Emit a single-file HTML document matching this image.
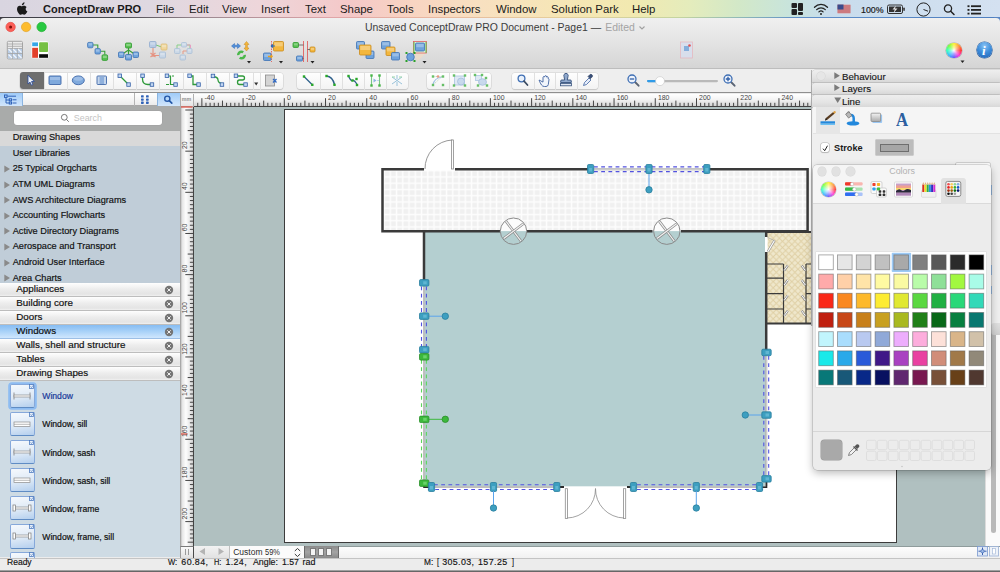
<!DOCTYPE html><html><head><meta charset="utf-8"><title>ConceptDraw PRO</title><style>*{box-sizing:border-box;margin:0;padding:0}
html,body{width:1000px;height:572px;overflow:hidden;background:#ececec;font-family:"Liberation Sans",sans-serif;color:#222}
#root{position:absolute;left:0;top:0;width:1000px;height:572px;overflow:hidden}
.abs{position:absolute}
svg{position:absolute;overflow:visible}
.t{position:absolute;white-space:nowrap;line-height:1}
#menubar{position:absolute;left:0;top:0;width:1000px;height:18px;background:linear-gradient(90deg,#d9d5e0 0,#dfd8e1 150px,#eed6da 260px,#f4c8c8 350px,#f8d4c2 410px,#f8e0c0 480px,#f6e6b6 560px,#f2e9b0 630px,#e4ecbc 690px,#d2e8c8 740px,#c8e4dc 790px,#c8dcec 830px,#d4e1f1 1000px)}
#mbline{position:absolute;left:0;top:17px;width:1000px;height:1.2px;background:linear-gradient(90deg,#3c3c44 0,#4a4a52 120px,#9a8890 200px,#e0a4a8 330px,#e8b4a0 420px,#e6cf9c 560px,#c4d4a0 680px,#8fb8b8 740px,#5f8fc8 800px,#4f7fc0 1000px)}
#menubar .t{top:3.7px;font-size:11.4px;color:#1a1a1a}
#titlebar{position:absolute;left:0;top:18px;width:1000px;height:51px;background:linear-gradient(#f0f0f0 0,#e6e6e6 20px,#d5d5d5 50px);border-bottom:1px solid #bdbdbd;border-radius:4px 4px 0 0}
#tb2{position:absolute;left:0;top:69px;width:1000px;height:24.4px;background:#eeeeee;border-bottom:1.2px solid #8f8f8f}
.grp{position:absolute;top:72.5px;height:16.5px;background:linear-gradient(#fefefe,#f3f3f3);border-radius:3px;box-shadow:0 0 0 .5px #d0d0d0,0 1px 1px rgba(0,0,0,.2)}
.grp i{position:absolute;top:0;width:1px;height:17px;background:#e0e0e0}
.st{font-size:9.200px;color:#111;-webkit-text-stroke:.18px #111}
.sb{font-size:9.800px;color:#111;-webkit-text-stroke:.18px #111}
.ss{font-size:8.620px;color:#111;-webkit-text-stroke:.2px currentColor}
.sbar{color:#111;-webkit-text-stroke:.15px #111}
.ph{font-size:9.700px;color:#141414;-webkit-text-stroke:.12px #141414}
</style></head><body><div id="root">
<div id="menubar">
<span class="t" style="left:43px;font-weight:bold;font-size:11.05px;">ConceptDraw PRO</span>
<span class="t" style="left:156px;">File</span>
<span class="t" style="left:189px;">Edit</span>
<span class="t" style="left:222px;">View</span>
<span class="t" style="left:261px;">Insert</span>
<span class="t" style="left:305px;">Text</span>
<span class="t" style="left:340px;">Shape</span>
<span class="t" style="left:387px;">Tools</span>
<span class="t" style="left:428px;">Inspectors</span>
<span class="t" style="left:496px;">Window</span>
<span class="t" style="left:551px;">Solution Park</span>
<span class="t" style="left:632px;">Help</span>
<span class="t " style="left:861.0px;top:4.6px;font-size:9.70px;transform:scaleX(0.911);transform-origin:0 0;-webkit-text-stroke:.2px #1a1a1a">100%</span>
<svg style="left:16.500px;top:1.800px" width="11" height="13.500" viewBox="0 0 12 14"><path d="M8.2 0c.1 1-.3 1.800-.9 2.400-.5.600-1.300 1-2 .900-.1-.9.300-1.800.9-2.300C6.700.4 7.600 0 8.200 0zM10.900 4.800c-.9.500-1.400 1.400-1.400 2.400 0 1.200.7 2.200 1.800 2.600-.3.900-.8 1.800-1.400 2.500-.5.700-1.100 1.300-1.900 1.300s-1.100-.5-2-.5c-1 0-1.300.5-2.100.5s-1.400-.7-2-1.400C.8 10.800 0 8.900 0 7.200 0 4.900 1.500 3.600 3 3.600c.8 0 1.600.6 2.100.6.500 0 1.400-.6 2.400-.6 1.100 0 2.200.5 2.800 1.500z" fill="#1b1b1b"/></svg>
<svg style="left:789px;top:2px" width="200" height="14" viewBox="0 0 200 14"><g fill="#222"><rect x="2.500" y="1" width="5.500" height="5" rx="1"/><rect x="9" y="1" width="5" height="8" rx="1"/><rect x="2.500" y="7" width="5.500" height="6" rx="1"/><rect x="9" y="10" width="5" height="3" rx="1"/></g><g fill="none" stroke="#222" stroke-width="1.300" stroke-linecap="round"><path d="M25.500 5.200a9 9 0 0 1 13 0"/><path d="M27.700 7.600a6 6 0 0 1 8.600 0"/><path d="M29.900 9.900a3 3 0 0 1 4.200 0"/></g><circle cx="32" cy="12" r="1" fill="#222"/><rect x="48.500" y="2.500" width="13" height="9" fill="#d9a2a6"/><g fill="#c0525a"><rect x="48.500" y="3.500" width="13" height="1"/><rect x="48.500" y="5.500" width="13" height="1"/><rect x="48.500" y="7.500" width="13" height="1"/><rect x="48.500" y="9.500" width="13" height="1"/></g><rect x="48.500" y="2.500" width="6" height="5" fill="#3a4a8c"/><rect x="98.500" y="3" width="15" height="8.500" rx="1.500" fill="none" stroke="#333" stroke-width="1"/><rect x="114.300" y="5.500" width="1.500" height="3.500" rx=".7" fill="#333"/><rect x="100" y="4.500" width="12" height="5.500" fill="#333"/><path d="M107 3.500l-3.500 4h2.300l-1.300 3.500 4-4.500h-2.500z" fill="#e8e8e8"/><circle cx="134.500" cy="7.500" r="6.600" fill="none" stroke="#222" stroke-width="1"/><path d="M134.500 7.500l4.500 1.700" stroke="#222" stroke-width="1" fill="none"/><circle cx="159" cy="6.500" r="3.600" fill="none" stroke="#222" stroke-width="1.300"/><path d="M161.700 9.200l3.300 3.300" stroke="#222" stroke-width="1.500" stroke-linecap="round"/><g fill="#222" transform="translate(-2.500 .8)"><rect x="181" y="2.500" width="2" height="1.800"/><rect x="184.500" y="2.500" width="10" height="1.800"/><rect x="181" y="6.200" width="2" height="1.800"/><rect x="184.500" y="6.200" width="10" height="1.800"/><rect x="181" y="9.900" width="2" height="1.800"/><rect x="184.500" y="9.900" width="10" height="1.800"/></g></svg>
</div>
<div id="mbline"></div>
<div class="abs" style="left:0;top:17px;width:6px;height:6px;background:#3c3c44"></div><div class="abs" style="left:994px;top:17px;width:6px;height:6px;background:#5a86c4"></div>
<div id="titlebar"></div><div id="tb2"></div>
<svg style="left:0;top:18px" width="60" height="20" viewBox="0 18 60 20"><circle cx="10.600" cy="27" r="4.700" fill="#fc5f57" stroke="#e0443e" stroke-width=".6"/><circle cx="10.600" cy="27" r="1.500" fill="#7c1008"/><circle cx="26.100" cy="27" r="4.700" fill="#fdbc2e" stroke="#dfa023" stroke-width=".6"/><circle cx="41.600" cy="27" r="4.700" fill="#28c840" stroke="#1dad2b" stroke-width=".6"/></svg>
<span class="t" style="left:365px;top:23.1px;font-size:10.450px;color:#3c3c3c">Unsaved ConceptDraw PRO Document - Page1 <span style="letter-spacing:-1px">—</span> <span style="color:#a4a4a4;margin-left:2.2px">Edited</span></span>
<svg style="left:637.5px;top:25.3px" width="8" height="6" viewBox="0 0 8 6"><path d="M1.500 1.500l2.500 2.500 2.500-2.500" fill="none" stroke="#a0a0a0" stroke-width="1.100"/></svg>
<svg style="left:0;top:38px" width="1000" height="30" viewBox="0 38 1000 30"><rect x="7.300" y="41.300" width="15.200" height="17.600" rx="1.200" fill="#ececec" stroke="#a4a4a4" stroke-width="1"/><rect x="8" y="48.500" width="14" height="10" fill="#b9cde6"/><g stroke="#a4a4a4" stroke-width=".8" fill="none"><path d="M7.500 44h15M7.500 46.300h15M7.500 48.500h15M7.500 53.500h15M12.500 41.500v7M12.300 48.500v10.500M17.300 48.500v10.500"/></g><g stroke="#f2f6fb" stroke-width="1.100"><path d="M8.500 49l3.500 3.500M8.500 54.500l3.500 3.500M13 49l3.500 3.500M13 54.500l3.500 3.500M18 49l3.500 3.500M18 54.500l3.500 3.500"/></g><rect x="31.200" y="40.800" width="17.500" height="17.800" rx="2.500" fill="#fff" stroke="#e0e0e0" stroke-width=".6"/><rect x="32.200" y="42.400" width="5.800" height="3.800" fill="#35a7e8"/><rect x="39.100" y="42.200" width="8.900" height="9.800" rx=".8" fill="#76c043"/><rect x="32.200" y="47.800" width="5.800" height="10" fill="#e2402a"/><rect x="39.100" y="54.200" width="8.900" height="3.600" fill="#0a0a0a"/><path d="M93 45h4.800v3.500M100.600 51.300h4.200v3.300" fill="none" stroke="#3aa03a" stroke-width="1.100"/><rect x="87.6" y="42.4" width="5.4" height="5.4" rx="1.2" fill="#6fa3dc" stroke="#3f72b4" stroke-width=".8" opacity="1"/><rect x="88.4" y="43.2" width="3.8" height="2.3" fill="#fff" opacity=".3"/><rect x="95.0" y="48.6" width="5.4" height="5.4" rx="1.2" fill="#6fa3dc" stroke="#3f72b4" stroke-width=".8" opacity="1"/><rect x="95.8" y="49.4" width="3.8" height="2.3" fill="#fff" opacity=".3"/><rect x="102.0" y="54.8" width="5.6" height="5.6" rx="1.2" fill="#58c050" stroke="#2e9a2e" stroke-width=".8" opacity="1"/><rect x="102.8" y="55.6" width="4.0" height="2.4" fill="#fff" opacity=".3"/><path d="M128.500 47v8M128.500 50l-6 4M128.500 50l6 4" fill="none" stroke="#3aa03a" stroke-width="1.200"/><rect x="125.5" y="43.0" width="6.0" height="5.0" rx="1" fill="#58c050" stroke="#2e9a2e" stroke-width=".8" opacity="1"/><rect x="126.3" y="43.8" width="4.4" height="2.1" fill="#fff" opacity=".3"/><rect x="118.5" y="52.0" width="5.5" height="5.5" rx="1" fill="#6fa3dc" stroke="#3f72b4" stroke-width=".8" opacity="1"/><rect x="119.3" y="52.8" width="3.9" height="2.3" fill="#fff" opacity=".3"/><rect x="125.5" y="54.5" width="6.0" height="5.5" rx="1" fill="#6fa3dc" stroke="#3f72b4" stroke-width=".8" opacity="1"/><rect x="126.3" y="55.3" width="4.4" height="2.3" fill="#fff" opacity=".3"/><rect x="133.0" y="52.0" width="5.5" height="5.5" rx="1" fill="#6fa3dc" stroke="#3f72b4" stroke-width=".8" opacity="1"/><rect x="133.8" y="52.8" width="3.9" height="2.3" fill="#fff" opacity=".3"/><g opacity=".8"><path d="M153 47.500v9.500M150.500 53l5 4M155.500 53l-5 4M153.500 55.500h6" fill="none" stroke="#e8806a" stroke-width="1.100"/><path d="M156 45l5 1.800" stroke="#58c050" stroke-width="1"/><rect x="149.5" y="41.5" width="6.5" height="6.0" rx="1" fill="#aec6e6" stroke="#7f9fcc" stroke-width=".8" opacity="1"/><rect x="150.3" y="42.3" width="4.9" height="2.5" fill="#fff" opacity=".3"/><rect x="161.0" y="44.0" width="6.0" height="6.0" rx="1" fill="#f4d48a" stroke="#dcb45c" stroke-width=".8" opacity="1"/><rect x="161.8" y="44.8" width="4.4" height="2.5" fill="#fff" opacity=".3"/><rect x="159.5" y="52.0" width="6.0" height="6.0" rx="1" fill="#c4d6ea" stroke="#9ab6d6" stroke-width=".8" opacity="1"/><rect x="160.3" y="52.8" width="4.4" height="2.5" fill="#fff" opacity=".3"/></g><g opacity=".75"><path d="M177 49v-4h5M187 45h3v4" fill="none" stroke="#6cc86c" stroke-width="1"/><path d="M187 45h3.500v4" fill="none" stroke="#e88ab8" stroke-width="1"/><path d="M183 54v-3h5" fill="none" stroke="#e8836a" stroke-width="1"/><rect x="181.5" y="42.5" width="5.0" height="4.5" rx="1" fill="#c4d6ea" stroke="#9ab6d6" stroke-width=".8" opacity="1"/><rect x="182.3" y="43.3" width="3.4" height="1.9" fill="#fff" opacity=".3"/><rect x="174.5" y="48.5" width="5.5" height="5.0" rx="1" fill="#c4d6ea" stroke="#9ab6d6" stroke-width=".8" opacity="1"/><rect x="175.3" y="49.3" width="3.9" height="2.1" fill="#fff" opacity=".3"/><rect x="187.0" y="48.5" width="5.0" height="5.0" rx="1" fill="#c4d6ea" stroke="#9ab6d6" stroke-width=".8" opacity="1"/><rect x="187.8" y="49.3" width="3.4" height="2.1" fill="#fff" opacity=".3"/><rect x="180.0" y="55.0" width="5.5" height="5.0" rx="1" fill="#c4d6ea" stroke="#9ab6d6" stroke-width=".8" opacity="1"/><rect x="180.8" y="55.8" width="3.9" height="2.1" fill="#fff" opacity=".3"/></g><path d="M231.500 46l3-2.500v1.700h3v-1.700l3 2.500-3 2.500v-1.700h-3v1.700z" fill="#4f8fdc" stroke="#2f68b4" stroke-width=".5"/><path d="M246.500 41.500l2.500 3h-1.600v3.500h1.600l-2.500 3-2.500-3h1.600v-3.500h-1.600z" fill="#f5b63c" stroke="#c98a1a" stroke-width=".5"/><circle cx="241.500" cy="55" r="3.300" fill="none" stroke="#4ab84a" stroke-width="2.400" stroke-dasharray="7 3"/><path d="M247.0 61.0h4l-2 2.500z" fill="#222"/><path d="M271.500 41v21" stroke="#e05050" stroke-width=".8" stroke-dasharray="1.500 1"/><rect x="273.5" y="41.5" width="10.0" height="9.5" rx="1" fill="#f3b73e" stroke="#c98a1a" stroke-width=".8" opacity="1"/><rect x="274.3" y="42.3" width="8.4" height="4.0" fill="#fff" opacity=".3"/><rect x="263.5" y="53.0" width="7.5" height="7.5" rx="1" fill="#6fa3dc" stroke="#3f72b4" stroke-width=".8" opacity="1"/><rect x="264.3" y="53.8" width="5.9" height="3.1" fill="#fff" opacity=".3"/><path d="M271 46h4M271 46l2-1.500M271 46l2 1.500" stroke="#2f68b4" stroke-width="1.100" fill="none"/><path d="M268 56.500h4l-1 1.500M272 56.500l-1-1.500" stroke="#e8a020" stroke-width="1.300" fill="none"/><path d="M279.0 61.0h4l-2 2.500z" fill="#222"/><path d="M303.500 41v21M307.500 41v21" stroke="#e05050" stroke-width=".8"/><rect x="293.0" y="42.5" width="5.5" height="5.0" rx="1" fill="#58c050" stroke="#2e9a2e" stroke-width=".8" opacity="1"/><rect x="293.8" y="43.3" width="3.9" height="2.1" fill="#fff" opacity=".3"/><rect x="296.5" y="56.0" width="6.0" height="5.0" rx="1" fill="#6fa3dc" stroke="#3f72b4" stroke-width=".8" opacity="1"/><rect x="297.3" y="56.8" width="4.4" height="2.1" fill="#fff" opacity=".3"/><rect x="310.0" y="47.0" width="5.0" height="5.0" rx="1" fill="#f3b73e" stroke="#c98a1a" stroke-width=".8" opacity="1"/><rect x="310.8" y="47.8" width="3.4" height="2.1" fill="#fff" opacity=".3"/><path d="M298.500 45h5M302.500 58.500h1M307.500 49.500h2.500" stroke="#555" stroke-width=".8"/><path d="M310.5 61.0h4l-2 2.500z" fill="#222"/><rect x="356.5" y="41.5" width="8.0" height="7.5" rx="1" fill="#6fa3dc" stroke="#3f72b4" stroke-width=".8" opacity="1"/><rect x="357.3" y="42.3" width="6.4" height="3.1" fill="#fff" opacity=".3"/><rect x="366.0" y="51.0" width="8.0" height="7.5" rx="1" fill="#6fa3dc" stroke="#3f72b4" stroke-width=".8" opacity="1"/><rect x="366.8" y="51.8" width="6.4" height="3.1" fill="#fff" opacity=".3"/><rect x="359.5" y="45.0" width="11.5" height="10.0" rx="1" fill="#f3b73e" stroke="#c98a1a" stroke-width=".8" opacity="1"/><rect x="360.3" y="45.8" width="9.9" height="4.2" fill="#fff" opacity=".3"/><rect x="381.5" y="41.5" width="8.5" height="7.5" rx="1" fill="#6fa3dc" stroke="#3f72b4" stroke-width=".8" opacity="1"/><rect x="382.3" y="42.3" width="6.9" height="3.1" fill="#fff" opacity=".3"/><rect x="386.0" y="47.0" width="9.0" height="8.5" rx="1" fill="#f3b73e" stroke="#c98a1a" stroke-width=".8" opacity="1"/><rect x="386.8" y="47.8" width="7.4" height="3.6" fill="#fff" opacity=".3"/><rect x="391.5" y="52.5" width="8.0" height="7.5" rx="1" fill="#6fa3dc" stroke="#3f72b4" stroke-width=".8" opacity="1"/><rect x="392.3" y="53.3" width="6.4" height="3.1" fill="#fff" opacity=".3"/><path d="M411 54l3-10h12v9l-8 8" fill="#f6dcc0" opacity=".6"/><rect x="413.500" y="41.500" width="13" height="11.500" fill="#dff0d8" stroke="#e06060" stroke-width=".8"/><path d="M414 42v11M426 42v11" stroke="#58c050" stroke-width="1"/><rect x="415.5" y="43.0" width="9.0" height="8.0" rx="1" fill="#6fa3dc" stroke="#3f72b4" stroke-width=".8" opacity="1"/><rect x="416.3" y="43.8" width="7.4" height="3.4" fill="#fff" opacity=".3"/><circle cx="410.500" cy="57" r="3.800" fill="#6fa3dc" stroke="#3f72b4" stroke-width=".8"/><g fill="#2aa02a"><rect x="405.500" y="52" width="2" height="2"/><rect x="413.500" y="52" width="2" height="2"/><rect x="405.500" y="60" width="2" height="2"/><rect x="413.500" y="60" width="2" height="2"/></g><path d="M422.5 61.0h4l-2 2.500z" fill="#222"/><g opacity=".8"><rect x="680.500" y="42" width="12" height="16" fill="#d8dff0" stroke="#e8b0b8" stroke-width=".8"/><rect x="684" y="46" width="5" height="5" fill="#6fa3dc"/><circle cx="689.500" cy="45.500" r="1.300" fill="#e03030"/></g></svg>
<div class="abs" style="left:946.1px;top:42.7px;width:15.8px;height:15.8px;border-radius:50%;background:radial-gradient(circle,#fff 0,rgba(255,255,255,.45) 28%,rgba(255,255,255,0) 62%),conic-gradient(from 90deg,#ff3a3a,#ff3ad8,#6a5cff,#3ab8ff,#3affc0,#7dff3a,#fff23a,#ff9a3a,#ff3a3a);box-shadow:0 0 0 .6px #b0b0b0"></div>
<svg style="left:960.3px;top:59.8px" width="6" height="4"><path d="M.5.5h4l-2 2.500z" fill="#222"/></svg>
<div class="abs" style="left:976.6px;top:42.2px;width:15.6px;height:15.6px;border-radius:50%;background:radial-gradient(circle at 50% 25%,#8cc4f4 0,#3f8fdc 45%,#1d5fb4 100%);box-shadow:0 0 0 .6px #2a5ea0"></div>
<span class="t" style="left:982px;top:43px;font:italic bold 13px 'Liberation Serif',serif;color:#fff">i</span>
<div class="grp" style="left:19.5px;width:263.5px"><i style="left:24.0px"></i><i style="left:47.2px"></i><i style="left:70.5px"></i><i style="left:93.5px"></i><i style="left:116.7px"></i><i style="left:139.9px"></i><i style="left:163.1px"></i><i style="left:186.3px"></i><i style="left:209.5px"></i><i style="left:233.5px"></i><i style="left:240.0px"></i></div>
<div class="abs" style="left:19.500px;top:72px;width:24px;height:17px;background:#6e6e6e;border-radius:3px 0 0 3px"></div>
<div class="grp" style="left:297.0px;width:111.0px"><i style="left:22.5px"></i><i style="left:45.0px"></i><i style="left:67.0px"></i><i style="left:89.0px"></i></div>
<div class="grp" style="left:427.0px;width:63.5px"><i style="left:21.5px"></i><i style="left:42.5px"></i></div>
<div class="grp" style="left:512.0px;width:86.0px"><i style="left:21.5px"></i><i style="left:43.0px"></i><i style="left:65.0px"></i></div>
<svg style="left:0;top:69px" width="1000" height="24" viewBox="0 69 1000 24"><path d="M28 75.2v8.8l2-1.9 1.4 3.1 1.5-.7-1.4-3h2.8z" fill="#eef3fb" stroke="#2a4a98" stroke-width=".8" stroke-linejoin="round"/><rect x="49" y="76" width="12" height="8.500" rx=".8" fill="#7fa9dc" stroke="#3f68a8" stroke-width=".9"/><rect x="50" y="77" width="10" height="3" fill="#a9c6ea" opacity=".7"/><ellipse cx="78.300" cy="80.300" rx="6" ry="4.400" fill="#7fa9dc" stroke="#3f68a8" stroke-width=".9"/><ellipse cx="78.300" cy="78.800" rx="4.500" ry="2" fill="#a9c6ea" opacity=".7"/><rect x="97" y="76" width="9.500" height="8.500" rx=".8" fill="#c5d6ec" stroke="#3f68a8" stroke-width=".9"/><rect x="99.500" y="76.500" width="4.500" height="7.500" fill="#8fb0dc"/><path d="M120 76l8.500 8.500" stroke="#2e9a3a" stroke-width="1.300"/><rect x="118.0" y="74.0" width="3.5" height="3.5" fill="#c4d8f2" stroke="#3460a8" stroke-width=".8"/><rect x="126.8" y="82.8" width="3.5" height="3.5" fill="#c4d8f2" stroke="#3460a8" stroke-width=".8"/><path d="M142.500 76v3q0 5.500 5.500 5.500h4" fill="none" stroke="#2e9a3a" stroke-width="1.300"/><rect x="140.8" y="74.0" width="3.5" height="3.5" fill="#c4d8f2" stroke="#3460a8" stroke-width=".8"/><rect x="150.2" y="82.8" width="3.5" height="3.5" fill="#c4d8f2" stroke="#3460a8" stroke-width=".8"/><path d="M167 76h3.500v8.500h4M166 84.500h3M172 76h2" fill="none" stroke="#2e9a3a" stroke-width="1.200"/><rect x="165.2" y="74.0" width="3.5" height="3.5" fill="#c4d8f2" stroke="#3460a8" stroke-width=".8"/><rect x="173.8" y="82.8" width="3.5" height="3.5" fill="#c4d8f2" stroke="#3460a8" stroke-width=".8"/><path d="M189.500 76h3.500v8.500h5" fill="none" stroke="#2e9a3a" stroke-width="1.300"/><rect x="187.8" y="74.0" width="3.5" height="3.5" fill="#c4d8f2" stroke="#3460a8" stroke-width=".8"/><rect x="196.8" y="82.8" width="3.5" height="3.5" fill="#c4d8f2" stroke="#3460a8" stroke-width=".8"/><path d="M213 76.500q5 .5 5 3.500t5 4" fill="none" stroke="#2e9a3a" stroke-width="1.300"/><rect x="211.2" y="74.2" width="3.5" height="3.5" fill="#c4d8f2" stroke="#3460a8" stroke-width=".8"/><rect x="220.2" y="82.8" width="3.5" height="3.5" fill="#c4d8f2" stroke="#3460a8" stroke-width=".8"/><path d="M236 76h6.500q2 0 2 2t-2 2h-3q-2 0-2 2.200t2 2.300h5" fill="none" stroke="#2e9a3a" stroke-width="1.300"/><rect x="234.2" y="74.0" width="3.5" height="3.5" fill="#c4d8f2" stroke="#3460a8" stroke-width=".8"/><rect x="243.8" y="82.8" width="3.5" height="3.5" fill="#c4d8f2" stroke="#3460a8" stroke-width=".8"/><path d="M254.200 82.500h4l-2 3z" fill="#333"/><rect x="265.500" y="75" width="9" height="11" fill="#d4d4d4" stroke="#8a8a8a" stroke-width=".8"/><path d="M273 79l3.500 3.500M276.500 79l-3.500 3.500" stroke="#2f68c4" stroke-width="1.300"/><path d="M304 76.500l8 8" stroke="#2d5f8a" stroke-width="1.300"/><rect x="302.8" y="75.3" width="2.400" height="2.400" fill="#2aa82a"/><rect x="311.1" y="83.6" width="2.400" height="2.400" fill="#2aa82a"/><path d="M326.500 76q6 .5 8 8.500" fill="none" stroke="#2d5f8a" stroke-width="1.400"/><rect x="325.3" y="74.8" width="2.400" height="2.400" fill="#2aa82a"/><rect x="333.3" y="83.6" width="2.400" height="2.400" fill="#2aa82a"/><path d="M348.500 76q2 5 4 4.500t4.500 4" fill="none" stroke="#2d5f8a" stroke-width="1.300"/><rect x="347.3" y="74.8" width="2.400" height="2.400" fill="#2aa82a"/><rect x="355.8" y="83.8" width="2.400" height="2.400" fill="#2aa82a"/><rect x="351.3" y="79.3" width="2.400" height="2.400" fill="#2aa82a"/><rect x="355.3" y="77.8" width="2.400" height="2.400" fill="#2aa82a"/><g opacity=".85"><path d="M371.500 75v11M379.500 75v11" stroke="#62c070" stroke-width="1.100"/><path d="M373.500 78.500l3 2-3 2z" fill="#7aa8dc"/><path d="M378.500 80.500h-1" stroke="#7aa8dc"/><rect x="370.3" y="74.3" width="2.400" height="2.400" fill="#2aa82a"/><rect x="378.3" y="74.3" width="2.400" height="2.400" fill="#2aa82a"/><rect x="370.3" y="84.3" width="2.400" height="2.400" fill="#2aa82a"/><rect x="378.3" y="84.3" width="2.400" height="2.400" fill="#2aa82a"/></g><g opacity=".6" stroke="#5aa0c8" stroke-width="1" fill="none"><path d="M392 77l10 7M402 77l-10 7M397 75v4M397 82v4"/><path d="M392 77h3M399 77h3" stroke="#5ac070"/></g><g opacity=".7"><path d="M433 85q1-7 9-8" fill="none" stroke="#7aa8dc" stroke-width="1.100"/><path d="M433 76.500h9M433 85l9-8.500" stroke="#9ac89a" stroke-width=".8" stroke-dasharray="1.500 1"/><circle cx="438" cy="76.500" r="1.300" fill="#e07050"/><rect x="431.8" y="75.3" width="2.400" height="2.400" fill="#2aa82a"/><rect x="441.8" y="75.3" width="2.400" height="2.400" fill="#2aa82a"/><rect x="431.8" y="83.8" width="2.400" height="2.400" fill="#2aa82a"/><rect x="441.8" y="83.8" width="2.400" height="2.400" fill="#2aa82a"/></g><g opacity=".7"><rect x="454.500" y="76" width="10" height="9" fill="#d4e2f2" stroke="#8ab0d8" stroke-width=".8"/><circle cx="461" cy="81.500" r="3.500" fill="#b4cce8" stroke="#7aa0d0" stroke-width=".7"/><rect x="452.8" y="74.3" width="2.400" height="2.400" fill="#2aa82a"/><rect x="463.8" y="74.3" width="2.400" height="2.400" fill="#2aa82a"/><rect x="452.8" y="84.3" width="2.400" height="2.400" fill="#2aa82a"/><rect x="463.8" y="84.3" width="2.400" height="2.400" fill="#2aa82a"/></g><g opacity=".7"><rect x="475.500" y="75.500" width="6" height="5" fill="#d4e2f2" stroke="#8ab0d8" stroke-width=".8"/><ellipse cx="482.500" cy="82" rx="4" ry="3.300" fill="#b4cce8" stroke="#7aa0d0" stroke-width=".7"/><rect x="473.8" y="73.8" width="2.400" height="2.400" fill="#2aa82a"/><rect x="484.8" y="76.8" width="2.400" height="2.400" fill="#2aa82a"/><rect x="476.8" y="84.3" width="2.400" height="2.400" fill="#2aa82a"/><rect x="485.8" y="84.3" width="2.400" height="2.400" fill="#2aa82a"/><rect x="480.8" y="73.8" width="2.400" height="2.400" fill="#2aa82a"/></g><circle cx="521.500" cy="78.500" r="3.400" fill="#e8f0fa" stroke="#3f6fb4" stroke-width="1.300"/><path d="M524 81.200l3.500 3.800" stroke="#3a4a60" stroke-width="1.700" stroke-linecap="round"/><path d="M540 80.500q-1.500-1.500-.5 1l2 3.500q1 1.500 3 1.500h1.500q2 0 2.300-2l.7-5q0-1-.9-.9v-1.600q-.8-1-1.600 0v-.9q-.9-1-1.700 0v.8q-1-1-1.800.2v5z" fill="#f2f6fc" stroke="#3f62a0" stroke-width=".9" stroke-linejoin="round"/><path d="M564 76.500a2.200 2.200 0 1 1 4 0l-.7 3.500h3q1 0 1 1v1.500h-10.600v-1.500q0-1 1-1h3z" fill="#8fa8cc" stroke="#34507c" stroke-width=".9"/><rect x="560.500" y="83.500" width="11" height="2.300" fill="#dfe6f2" stroke="#34507c" stroke-width=".8"/><path d="M583.500 85.500l1-3 4.500-4.500 2 2-4.500 4.500z" fill="#e4ecfa" stroke="#3f62a0" stroke-width=".8"/><path d="M588 76.500l2-2q1-.6 2 .3t.3 2l-2 2z" fill="#3a5078" stroke="#2a3c60" stroke-width=".6"/><path d="M635 82l3.600 3.700" stroke="#5a6474" stroke-width="1.900" stroke-linecap="round"/><circle cx="632" cy="79" r="4" fill="#eef3fb" stroke="#3f6fb4" stroke-width="1.300"/><path d="M629.800 79h4.400" stroke="#2f5fa8" stroke-width="1.300"/><rect x="647" y="80" width="71" height="2.200" rx="1.100" fill="#b9b9b9"/><rect x="647" y="80" width="12" height="2.200" rx="1.100" fill="#2f9be8"/><circle cx="660" cy="81.100" r="4.500" fill="#fff" stroke="#c4c4c4" stroke-width=".6"/><path d="M731 82l3.600 3.700" stroke="#5a6474" stroke-width="1.900" stroke-linecap="round"/><circle cx="728" cy="79" r="4" fill="#eef3fb" stroke="#3f6fb4" stroke-width="1.300"/><path d="M725.800 79h4.400M728 76.800v4.400" stroke="#2f5fa8" stroke-width="1.300"/></svg>
<div class="abs" style="left:193px;top:106px;width:807px;height:440px;background:#b0c0c0"></div>
<div class="abs" style="left:283.500px;top:108.700px;width:613px;height:434px;background:#fff;border:1px solid #3c3c3c;border-right-width:1.500px;border-bottom-width:1.500px"></div>
<svg style="left:0;top:0" width="1000" height="572" viewBox="0 0 1000 572"><defs><pattern id="grid" x="383.500" y="170.200" width="6.250" height="6.250" patternUnits="userSpaceOnUse"><rect width="6.250" height="6.250" fill="#fdfdfd"/><rect x="1.3" y="1.3" width="4.700" height="4.700" fill="#f0f0f0"/></pattern><pattern id="xh" x="767" y="232" width="6.2" height="6.2" patternUnits="userSpaceOnUse"><rect width="6.2" height="6.2" fill="#efe7cb"/><path d="M0 0l6.2 6.2M6.2 0l-6.2 6.2" stroke="#dfcfa4" stroke-width=".95"/></pattern></defs><rect x="382.500" y="169.200" width="425.100" height="62" fill="url(#grid)"/><rect x="424.500" y="231.200" width="341.500" height="255.300" fill="#b4cfd0"/><rect x="767" y="232" width="46" height="91.500" fill="url(#xh)"/><g fill="none" stroke="#3a3a3a" stroke-width="2.500" stroke-linejoin="miter"><path d="M424 169.200H382.500V231.200H500M527 231.200H652.500M681 231.200H807.600V169.200H707M590.500 169.200H455"/><path d="M424 230.500V280M766.200 231.200V237M766.200 252V352"/><path d="M766.200 232H813M766.200 323.600H813" stroke-width="2"/></g><g fill="none" stroke="#3a3a3a" stroke-width="1.200"><path d="M767 264h16.500M767 278.200h16.500M767 293.600h16.500M767 309h16.500M783.500 264v59M806 264h7M806 278.200h7M806 293.600h7M806 309h7M806 264v59" /></g><path d="M784.2 270.5L787.8 265.5" stroke="#8c8c8c" stroke-width="2.2"/><path d="M784.2 270.5L787.8 265.5" stroke="#fff" stroke-width="1.0"/><path d="M805.3 270.5L801.7 265.5" stroke="#8c8c8c" stroke-width="2.2"/><path d="M805.3 270.5L801.7 265.5" stroke="#fff" stroke-width="1.0"/><path d="M784.2 285.0L787.8 280.0" stroke="#8c8c8c" stroke-width="2.2"/><path d="M784.2 285.0L787.8 280.0" stroke="#fff" stroke-width="1.0"/><path d="M805.3 285.0L801.7 280.0" stroke="#8c8c8c" stroke-width="2.2"/><path d="M805.3 285.0L801.7 280.0" stroke="#fff" stroke-width="1.0"/><path d="M784.2 300.3L787.8 295.3" stroke="#8c8c8c" stroke-width="2.2"/><path d="M784.2 300.3L787.8 295.3" stroke="#fff" stroke-width="1.0"/><path d="M805.3 300.3L801.7 295.3" stroke="#8c8c8c" stroke-width="2.2"/><path d="M805.3 300.3L801.7 295.3" stroke="#fff" stroke-width="1.0"/><path d="M784.2 315.7L787.8 310.7" stroke="#8c8c8c" stroke-width="2.2"/><path d="M784.2 315.7L787.8 310.7" stroke="#fff" stroke-width="1.0"/><path d="M805.3 315.7L801.7 310.7" stroke="#8c8c8c" stroke-width="2.2"/><path d="M805.3 315.7L801.7 310.7" stroke="#fff" stroke-width="1.0"/><rect x="765" y="237" width="2.600" height="15" fill="#fff"/><path d="M768.0 251.5L774.5 240.5" stroke="#8c8c8c" stroke-width="2.4"/><path d="M768.0 251.5L774.5 240.5" stroke="#fff" stroke-width="1.2"/><path d="M767.500 237.500l7 3" stroke="#9a9a9a" stroke-width=".6"/><rect x="424.500" y="167.800" width="29" height="2.600" fill="#fff"/><path d="M425 169a28.500 28.500 0 0 1 27.500-29" fill="none" stroke="#8c8c8c" stroke-width=".9"/><rect x="451.500" y="140" width="2" height="29" fill="#fff" stroke="#8c8c8c" stroke-width=".8"/><rect x="564" y="486.600" width="63" height="3" fill="#fff"/><rect x="565.300" y="488.700" width="2.200" height="29.700" fill="#fff" stroke="#8c8c8c" stroke-width=".8"/><rect x="623.500" y="488.700" width="2.200" height="29.700" fill="#fff" stroke="#8c8c8c" stroke-width=".8"/><path d="M567 518a29 29 0 0 0 28.500-29.500M624 518a29 29 0 0 1-28.500-29.500" fill="none" stroke="#8c8c8c" stroke-width=".8"/><path d="M500.3 231.2a13.2 13.2 0 0 1 26.4 0z" fill="#fcfcfc"/><path d="M500.3 231.2a13.2 13.2 0 0 0 26.4 0z" fill="#b4cfd0"/><path d="M506.1 221.4L520.9 241.0" stroke="#8a8a8a" stroke-width="2.600"/><path d="M506.1 221.4L520.9 241.0" stroke="#f4f4f4" stroke-width="1.200"/><path d="M503.7 238.6L523.3 223.8" stroke="#8a8a8a" stroke-width="2.600"/><path d="M503.7 238.6L523.3 223.8" stroke="#f4f4f4" stroke-width="1.200"/><circle cx="513.5" cy="231.2" r="13.2" fill="none" stroke="#8a8a8a" stroke-width="1"/><path d="M653.6 231.2a13.2 13.2 0 0 1 26.4 0z" fill="#fcfcfc"/><path d="M653.6 231.2a13.2 13.2 0 0 0 26.4 0z" fill="#b4cfd0"/><path d="M659.4 221.4L674.2 241.0" stroke="#8a8a8a" stroke-width="2.600"/><path d="M659.4 221.4L674.2 241.0" stroke="#f4f4f4" stroke-width="1.200"/><path d="M657.0 238.6L676.6 223.8" stroke="#8a8a8a" stroke-width="2.600"/><path d="M657.0 238.6L676.6 223.8" stroke="#f4f4f4" stroke-width="1.200"/><circle cx="666.8" cy="231.2" r="13.2" fill="none" stroke="#8a8a8a" stroke-width="1"/><path d="M590.5 169.2L707.0 169.2" stroke="#9c9c9c" stroke-width="2"/><path d="M590.5 169.2L707.0 169.2" stroke="#f4f4f4" stroke-width=".8"/><path d="M424.0 283.0L424.0 486.0" stroke="#9c9c9c" stroke-width="2"/><path d="M424.0 283.0L424.0 486.0" stroke="#f4f4f4" stroke-width=".8"/><path d="M766.2 352.0L766.2 486.0" stroke="#9c9c9c" stroke-width="2"/><path d="M766.2 352.0L766.2 486.0" stroke="#f4f4f4" stroke-width=".8"/><path d="M424.0 487.0L557.0 487.0" stroke="#9c9c9c" stroke-width="2"/><path d="M424.0 487.0L557.0 487.0" stroke="#f4f4f4" stroke-width=".8"/><path d="M633.5 487.0L766.2 487.0" stroke="#9c9c9c" stroke-width="2"/><path d="M633.5 487.0L766.2 487.0" stroke="#f4f4f4" stroke-width=".8"/><path d="M560 487h4M627 487h4" stroke="#2a2a2a" stroke-width="2"/><path d="M760 487.300h6.500v-6" fill="none" stroke="#2a2a2a" stroke-width="1.600"/><path d="M424 480v7.300h6" fill="none" stroke="#2a2a2a" stroke-width="1.600"/><path d="M594 166.900H704M594 171.600H704" fill="none" stroke="#5252e0" stroke-width="1.100" stroke-dasharray="3.800 3.400"/><path d="M421.500 286.500V347M426.400 286.500V347" fill="none" stroke="#5252e0" stroke-width="1.100" stroke-dasharray="3.800 3.400"/><path d="M421.500 360V483M426.400 360V481" fill="none" stroke="#5cd65c" stroke-width="1.100" stroke-dasharray="3.800 3.400"/><path d="M434 484.700H556M637 484.700H757M428 489.500H556M637 489.500H763" fill="none" stroke="#5252e0" stroke-width="1.100" stroke-dasharray="3.800 3.400"/><path d="M763.800 356V476M768.700 356V482" fill="none" stroke="#5252e0" stroke-width="1.100" stroke-dasharray="3.800 3.400"/><path d="M649.0 173.0L649.0 187.0" stroke="#5aa4ec" stroke-width="1"/><rect x="587.5" y="164.5" width="6.200" height="9" rx="1.200" fill="#3d9fc0" stroke="#2a7f9e" stroke-width=".8"/><rect x="589.1" y="168.0" width="3" height="3.500" fill="#7cc8e0" opacity=".55"/><rect x="645.9" y="164.5" width="6.200" height="9" rx="1.200" fill="#3d9fc0" stroke="#2a7f9e" stroke-width=".8"/><rect x="647.5" y="168.0" width="3" height="3.500" fill="#7cc8e0" opacity=".55"/><rect x="703.7" y="164.5" width="6.200" height="9" rx="1.200" fill="#3d9fc0" stroke="#2a7f9e" stroke-width=".8"/><rect x="705.3" y="168.0" width="3" height="3.500" fill="#7cc8e0" opacity=".55"/><circle cx="649.0" cy="189.8" r="3.200" fill="#3d9fc0" stroke="#2a7f9e" stroke-width=".8"/><path d="M428.0 316.2L442.0 316.2" stroke="#5aa4ec" stroke-width="1"/><rect x="419.5" y="279.6" width="9.400" height="6.500" rx="1.200" fill="#3d9fc0" stroke="#2a7f9e" stroke-width=".8"/><rect x="423.2" y="281.3" width="3.500" height="3" fill="#7cc8e0" opacity=".55"/><rect x="419.5" y="312.9" width="9.400" height="6.500" rx="1.200" fill="#3d9fc0" stroke="#2a7f9e" stroke-width=".8"/><rect x="423.2" y="314.7" width="3.500" height="3" fill="#7cc8e0" opacity=".55"/><circle cx="445.3" cy="316.2" r="3.200" fill="#3d9fc0" stroke="#2a7f9e" stroke-width=".8"/><rect x="419.5" y="346.4" width="9.400" height="6.500" rx="1.200" fill="#3d9fc0" stroke="#2a7f9e" stroke-width=".8"/><rect x="423.2" y="348.2" width="3.500" height="3" fill="#7cc8e0" opacity=".55"/><path d="M428.0 419.3L442.0 419.3" stroke="#3cb83c" stroke-width="1"/><rect x="419.5" y="353.6" width="9.400" height="6.500" rx="1.200" fill="#3cb83c" stroke="#2a8f2a" stroke-width=".8"/><rect x="423.2" y="355.3" width="3.500" height="3" fill="#8fe88f" opacity=".55"/><rect x="419.5" y="416.1" width="9.400" height="6.500" rx="1.200" fill="#3cb83c" stroke="#2a8f2a" stroke-width=".8"/><rect x="423.2" y="417.8" width="3.500" height="3" fill="#8fe88f" opacity=".55"/><circle cx="445.3" cy="419.3" r="3.200" fill="#3cb83c" stroke="#2a8f2a" stroke-width=".8"/><rect x="419.5" y="479.9" width="9.400" height="6.500" rx="1.200" fill="#3cb83c" stroke="#2a8f2a" stroke-width=".8"/><rect x="423.2" y="481.7" width="3.500" height="3" fill="#8fe88f" opacity=".55"/><rect x="428.4" y="482.5" width="6.200" height="9" rx="1.200" fill="#3d9fc0" stroke="#2a7f9e" stroke-width=".8"/><rect x="430.0" y="486.0" width="3" height="3.500" fill="#7cc8e0" opacity=".55"/><rect x="490.4" y="482.5" width="6.200" height="9" rx="1.200" fill="#3d9fc0" stroke="#2a7f9e" stroke-width=".8"/><rect x="492.0" y="486.0" width="3" height="3.500" fill="#7cc8e0" opacity=".55"/><rect x="553.7" y="482.5" width="6.200" height="9" rx="1.200" fill="#3d9fc0" stroke="#2a7f9e" stroke-width=".8"/><rect x="555.3" y="486.0" width="3" height="3.500" fill="#7cc8e0" opacity=".55"/><rect x="630.4" y="482.5" width="6.200" height="9" rx="1.200" fill="#3d9fc0" stroke="#2a7f9e" stroke-width=".8"/><rect x="632.0" y="486.0" width="3" height="3.500" fill="#7cc8e0" opacity=".55"/><rect x="693.2" y="482.5" width="6.200" height="9" rx="1.200" fill="#3d9fc0" stroke="#2a7f9e" stroke-width=".8"/><rect x="694.8" y="486.0" width="3" height="3.500" fill="#7cc8e0" opacity=".55"/><rect x="756.4" y="482.5" width="6.200" height="9" rx="1.200" fill="#3d9fc0" stroke="#2a7f9e" stroke-width=".8"/><rect x="758.0" y="486.0" width="3" height="3.500" fill="#7cc8e0" opacity=".55"/><path d="M493.5 491.0L493.5 505.0" stroke="#5aa4ec" stroke-width="1"/><path d="M696.3 491.0L696.3 505.0" stroke="#5aa4ec" stroke-width="1"/><circle cx="493.5" cy="508.0" r="3.200" fill="#3d9fc0" stroke="#2a7f9e" stroke-width=".8"/><circle cx="696.3" cy="508.0" r="3.200" fill="#3d9fc0" stroke="#2a7f9e" stroke-width=".8"/><path d="M749.0 415.0L762.0 415.0" stroke="#5aa4ec" stroke-width="1"/><rect x="761.8" y="349.2" width="9.400" height="6.500" rx="1.200" fill="#3d9fc0" stroke="#2a7f9e" stroke-width=".8"/><rect x="765.5" y="351.0" width="3.500" height="3" fill="#7cc8e0" opacity=".55"/><rect x="761.8" y="411.8" width="9.400" height="6.500" rx="1.200" fill="#3d9fc0" stroke="#2a7f9e" stroke-width=".8"/><rect x="765.5" y="413.5" width="3.500" height="3" fill="#7cc8e0" opacity=".55"/><circle cx="745.3" cy="415.0" r="3.200" fill="#3d9fc0" stroke="#2a7f9e" stroke-width=".8"/><rect x="761.8" y="475.6" width="9.400" height="6.500" rx="1.200" fill="#3d9fc0" stroke="#2a7f9e" stroke-width=".8"/><rect x="765.5" y="477.3" width="3.500" height="3" fill="#7cc8e0" opacity=".55"/></svg>
<div class="abs" style="left:193px;top:93.500px;width:807px;height:13.6px;background:linear-gradient(#fff,#f4f4f4 45%,#d4d4d4);border-bottom:1.5px solid #444"></div>
<div class="abs" style="left:180px;top:106px;width:14px;height:440px;background:linear-gradient(90deg,#a8a8a8 0,#e6e6e6 18%,#fdfdfd 45%,#e6e6e6 80%,#cfcfcf);border-right:1.5px solid #444"></div>
<div class="abs" style="left:179.500px;top:93.500px;width:14px;height:13px;background:linear-gradient(#fff,#e4e4e4);border:1px solid #b0b0b0;border-top:0"></div>
<span class="t" style="left:181.8px;top:97.2px;font-size:5.3px;font-weight:bold;color:#929292">mm</span>
<svg style="left:0;top:0" width="1000" height="572" viewBox="0 0 1000 572"><g stroke="#444" stroke-width="1"><path d="M197.74 106.200v-3.4M201.86 106.200v-8.0M205.98 106.200v-3.4M210.10 106.200v-3.4M214.23 106.200v-3.4M218.35 106.200v-3.4M222.47 106.200v-5.6M226.59 106.200v-3.4M230.71 106.200v-3.4M234.84 106.200v-3.4M238.96 106.200v-3.4M243.08 106.200v-8.0M247.20 106.200v-3.4M251.32 106.200v-3.4M255.45 106.200v-3.4M259.57 106.200v-3.4M263.69 106.200v-5.6M267.81 106.200v-3.4M271.93 106.200v-3.4M276.06 106.200v-3.4M280.18 106.200v-3.4M284.30 106.200v-8.0M288.42 106.200v-3.4M292.54 106.200v-3.4M296.67 106.200v-3.4M300.79 106.200v-3.4M304.91 106.200v-5.6M309.03 106.200v-3.4M313.15 106.200v-3.4M317.28 106.200v-3.4M321.40 106.200v-3.4M325.52 106.200v-8.0M329.64 106.200v-3.4M333.76 106.200v-3.4M337.89 106.200v-3.4M342.01 106.200v-3.4M346.13 106.200v-5.6M350.25 106.200v-3.4M354.37 106.200v-3.4M358.50 106.200v-3.4M362.62 106.200v-3.4M366.74 106.200v-8.0M370.86 106.200v-3.4M374.98 106.200v-3.4M379.11 106.200v-3.4M383.23 106.200v-3.4M387.35 106.200v-5.6M391.47 106.200v-3.4M395.59 106.200v-3.4M399.72 106.200v-3.4M403.84 106.200v-3.4M407.96 106.200v-8.0M412.08 106.200v-3.4M416.20 106.200v-3.4M420.33 106.200v-3.4M424.45 106.200v-3.4M428.57 106.200v-5.6M432.69 106.200v-3.4M436.81 106.200v-3.4M440.94 106.200v-3.4M445.06 106.200v-3.4M449.18 106.200v-8.0M453.30 106.200v-3.4M457.42 106.200v-3.4M461.55 106.200v-3.4M465.67 106.200v-3.4M469.79 106.200v-5.6M473.91 106.200v-3.4M478.03 106.200v-3.4M482.16 106.200v-3.4M486.28 106.200v-3.4M490.40 106.200v-8.0M494.52 106.200v-3.4M498.64 106.200v-3.4M502.77 106.200v-3.4M506.89 106.200v-3.4M511.01 106.200v-5.6M515.13 106.200v-3.4M519.25 106.200v-3.4M523.38 106.200v-3.4M527.50 106.200v-3.4M531.62 106.200v-8.0M535.74 106.200v-3.4M539.86 106.200v-3.4M543.99 106.200v-3.4M548.11 106.200v-3.4M552.23 106.200v-5.6M556.35 106.200v-3.4M560.47 106.200v-3.4M564.60 106.200v-3.4M568.72 106.200v-3.4M572.84 106.200v-8.0M576.96 106.200v-3.4M581.08 106.200v-3.4M585.21 106.200v-3.4M589.33 106.200v-3.4M593.45 106.200v-5.6M597.57 106.200v-3.4M601.69 106.200v-3.4M605.82 106.200v-3.4M609.94 106.200v-3.4M614.06 106.200v-8.0M618.18 106.200v-3.4M622.30 106.200v-3.4M626.43 106.200v-3.4M630.55 106.200v-3.4M634.67 106.200v-5.6M638.79 106.200v-3.4M642.91 106.200v-3.4M647.04 106.200v-3.4M651.16 106.200v-3.4M655.28 106.200v-8.0M659.40 106.200v-3.4M663.52 106.200v-3.4M667.65 106.200v-3.4M671.77 106.200v-3.4M675.89 106.200v-5.6M680.01 106.200v-3.4M684.13 106.200v-3.4M688.26 106.200v-3.4M692.38 106.200v-3.4M696.50 106.200v-8.0M700.62 106.200v-3.4M704.74 106.200v-3.4M708.87 106.200v-3.4M712.99 106.200v-3.4M717.11 106.200v-5.6M721.23 106.200v-3.4M725.35 106.200v-3.4M729.48 106.200v-3.4M733.60 106.200v-3.4M737.72 106.200v-8.0M741.84 106.200v-3.4M745.96 106.200v-3.4M750.09 106.200v-3.4M754.21 106.200v-3.4M758.33 106.200v-5.6M762.45 106.200v-3.4M766.57 106.200v-3.4M770.70 106.200v-3.4M774.82 106.200v-3.4M778.94 106.200v-8.0M783.06 106.200v-3.4M787.18 106.200v-3.4M791.31 106.200v-3.4M795.43 106.200v-3.4M799.55 106.200v-5.6M803.67 106.200v-3.4M807.79 106.200v-3.4M811.92 106.200v-3.4M193.300 110.00h-8.0M193.300 114.12h-3.4M193.300 118.23h-3.4M193.300 122.35h-3.4M193.300 126.46h-3.4M193.300 130.58h-5.6M193.300 134.70h-3.4M193.300 138.81h-3.4M193.300 142.93h-3.4M193.300 147.04h-3.4M193.300 151.16h-8.0M193.300 155.28h-3.4M193.300 159.39h-3.4M193.300 163.51h-3.4M193.300 167.62h-3.4M193.300 171.74h-5.6M193.300 175.86h-3.4M193.300 179.97h-3.4M193.300 184.09h-3.4M193.300 188.20h-3.4M193.300 192.32h-8.0M193.300 196.44h-3.4M193.300 200.55h-3.4M193.300 204.67h-3.4M193.300 208.78h-3.4M193.300 212.90h-5.6M193.300 217.02h-3.4M193.300 221.13h-3.4M193.300 225.25h-3.4M193.300 229.36h-3.4M193.300 233.48h-8.0M193.300 237.60h-3.4M193.300 241.71h-3.4M193.300 245.83h-3.4M193.300 249.94h-3.4M193.300 254.06h-5.6M193.300 258.18h-3.4M193.300 262.29h-3.4M193.300 266.41h-3.4M193.300 270.52h-3.4M193.300 274.64h-8.0M193.300 278.76h-3.4M193.300 282.87h-3.4M193.300 286.99h-3.4M193.300 291.10h-3.4M193.300 295.22h-5.6M193.300 299.34h-3.4M193.300 303.45h-3.4M193.300 307.57h-3.4M193.300 311.68h-3.4M193.300 315.80h-8.0M193.300 319.92h-3.4M193.300 324.03h-3.4M193.300 328.15h-3.4M193.300 332.26h-3.4M193.300 336.38h-5.6M193.300 340.50h-3.4M193.300 344.61h-3.4M193.300 348.73h-3.4M193.300 352.84h-3.4M193.300 356.96h-8.0M193.300 361.08h-3.4M193.300 365.19h-3.4M193.300 369.31h-3.4M193.300 373.42h-3.4M193.300 377.54h-5.6M193.300 381.66h-3.4M193.300 385.77h-3.4M193.300 389.89h-3.4M193.300 394.00h-3.4M193.300 398.12h-8.0M193.300 402.24h-3.4M193.300 406.35h-3.4M193.300 410.47h-3.4M193.300 414.58h-3.4M193.300 418.70h-5.6M193.300 422.82h-3.4M193.300 426.93h-3.4M193.300 431.05h-3.4M193.300 435.16h-3.4M193.300 439.28h-8.0M193.300 443.40h-3.4M193.300 447.51h-3.4M193.300 451.63h-3.4M193.300 455.74h-3.4M193.300 459.86h-5.6M193.300 463.98h-3.4M193.300 468.09h-3.4M193.300 472.21h-3.4M193.300 476.32h-3.4M193.300 480.44h-8.0M193.300 484.56h-3.4M193.300 488.67h-3.4M193.300 492.79h-3.4M193.300 496.90h-3.4M193.300 501.02h-5.6M193.300 505.14h-3.4M193.300 509.25h-3.4M193.300 513.37h-3.4M193.300 517.48h-3.4M193.300 521.60h-8.0M193.300 525.72h-3.4M193.300 529.83h-3.4M193.300 533.95h-3.4M193.300 538.06h-3.4M193.300 542.18h-5.6"/></g><path d="M181 107h11.500" stroke="#e0483a" stroke-width="1.200"/><path d="M180.500 434h7" stroke="#e0483a" stroke-width="1.200"/><g font-size="6.9" fill="#444" font-family="Liberation Sans,sans-serif"><text x="204.5" y="99.9">-40</text><text x="245.7" y="99.9">-20</text><text x="286.9" y="99.9">0</text><text x="328.1" y="99.9">20</text><text x="369.3" y="99.9">40</text><text x="410.6" y="99.9">60</text><text x="451.8" y="99.9">80</text><text x="493.0" y="99.9">100</text><text x="534.2" y="99.9">120</text><text x="575.4" y="99.9">140</text><text x="616.7" y="99.9">160</text><text x="657.9" y="99.9">180</text><text x="699.1" y="99.9">200</text><text x="740.3" y="99.9">220</text><text x="781.5" y="99.9">240</text><text transform="translate(187.200 149.0) rotate(-90)">20</text><text transform="translate(187.200 190.1) rotate(-90)">40</text><text transform="translate(187.200 231.3) rotate(-90)">60</text><text transform="translate(187.200 272.4) rotate(-90)">80</text><text transform="translate(187.200 313.6) rotate(-90)">100</text><text transform="translate(187.200 354.8) rotate(-90)">120</text><text transform="translate(187.200 395.9) rotate(-90)">140</text><text transform="translate(187.200 437.1) rotate(-90)">160</text><text transform="translate(187.200 478.2) rotate(-90)">180</text><text transform="translate(187.200 519.4) rotate(-90)">200</text></g></svg>
<div class="abs" style="left:0;top:93px;width:180px;height:464px;background:#c0cdd8"></div>
<div class="abs" style="left:0;top:93px;width:180px;height:13px;background:linear-gradient(#fff,#ececec);border-bottom:1px solid #a8a8a8"></div>
<div class="abs" style="left:0;top:93px;width:22.700px;height:12.500px;background:linear-gradient(#9fcbf8,#d2e6fb);border-right:1px solid #8ab4e0"></div>
<div class="abs" style="left:134px;top:93px;width:1px;height:12.500px;background:#b4b4b4"></div>
<div class="abs" style="left:156.500px;top:93px;width:23px;height:12.500px;background:linear-gradient(#9fcbf8,#d2e6fb);border-left:1px solid #8ab4e0"></div>
<svg style="left:0;top:93px" width="180" height="13" viewBox="0 93 180 13"><g fill="none" stroke="#2f62b8" stroke-width="1"><rect x="4.500" y="95" width="2.600" height="2.400"/><path d="M7.500 96.200h8.500M6 97.500v5.500h3M6 100h3"/><rect x="9.300" y="98.800" width="2.200" height="2"/><rect x="9.300" y="102" width="2.200" height="2"/><path d="M12.500 99.800h4M12.500 103h4"/></g><rect x="141" y="95.2" width="2.700" height="2.300" rx=".6" fill="#2f62b8"/><rect x="146" y="95.2" width="2.700" height="2.300" rx=".6" fill="#2f62b8"/><rect x="141" y="98.4" width="2.700" height="2.300" rx=".6" fill="#2f62b8"/><rect x="146" y="98.4" width="2.700" height="2.300" rx=".6" fill="#2f62b8"/><rect x="141" y="101.6" width="2.700" height="2.300" rx=".6" fill="#2f62b8"/><rect x="146" y="101.6" width="2.700" height="2.300" rx=".6" fill="#2f62b8"/><circle cx="167.300" cy="98.700" r="2.600" fill="none" stroke="#2458a8" stroke-width="1.400"/><path d="M169.300 100.700l2.500 2.500" stroke="#2458a8" stroke-width="1.700" stroke-linecap="round"/></svg>
<div class="abs" style="left:0;top:106px;width:180px;height:24.500px;background:#a9abaa"></div>
<div class="abs" style="left:14.300px;top:111.200px;width:147.800px;height:13.400px;background:#fff;border-radius:3px;box-shadow:0 0 0 .5px #a0a0a0"></div>
<svg style="left:60px;top:113px" width="10" height="10" viewBox="0 0 10 10"><circle cx="4.300" cy="4.300" r="2.900" fill="none" stroke="#6a6a6a" stroke-width=".9"/><path d="M6.400 6.400l2.400 2.400" stroke="#6a6a6a" stroke-width=".9"/></svg>
<span class="t" style="left:73.800px;top:113.500px;font-size:8.900px;color:#c4c4c4">Search</span>
<div class="abs" style="left:0;top:130.500px;width:180px;height:15.300px;background:#d9d9d9"></div>
<span class="t st" style="left:12.700px;top:133.0px">Drawing Shapes</span>
<span class="t st" style="left:12.700px;top:148.6px">User Libraries</span>
<span class="t st" style="left:12.700px;top:164.2px">25 Typical Orgcharts</span>
<svg style="left:4px;top:164.8px" width="7" height="8"><path d="M.3.600l5.700 3.400-5.700 3.400z" fill="#8a8a8a"/></svg>
<span class="t st" style="left:12.700px;top:179.9px">ATM UML Diagrams</span>
<svg style="left:4px;top:180.5px" width="7" height="8"><path d="M.3.600l5.700 3.400-5.700 3.400z" fill="#8a8a8a"/></svg>
<span class="t st" style="left:12.700px;top:195.5px">AWS Architecture Diagrams</span>
<svg style="left:4px;top:196.1px" width="7" height="8"><path d="M.3.600l5.700 3.400-5.700 3.400z" fill="#8a8a8a"/></svg>
<span class="t st" style="left:12.700px;top:211.1px">Accounting Flowcharts</span>
<svg style="left:4px;top:211.7px" width="7" height="8"><path d="M.3.600l5.700 3.400-5.700 3.400z" fill="#8a8a8a"/></svg>
<span class="t st" style="left:12.700px;top:226.7px">Active Directory Diagrams</span>
<svg style="left:4px;top:227.3px" width="7" height="8"><path d="M.3.600l5.700 3.400-5.700 3.400z" fill="#8a8a8a"/></svg>
<span class="t st" style="left:12.700px;top:242.3px">Aerospace and Transport</span>
<svg style="left:4px;top:242.9px" width="7" height="8"><path d="M.3.600l5.700 3.400-5.700 3.400z" fill="#8a8a8a"/></svg>
<span class="t st" style="left:12.700px;top:258.0px">Android User Interface</span>
<svg style="left:4px;top:258.6px" width="7" height="8"><path d="M.3.600l5.700 3.400-5.700 3.400z" fill="#8a8a8a"/></svg>
<span class="t st" style="left:12.700px;top:273.6px">Area Charts</span>
<svg style="left:4px;top:274.2px" width="7" height="8"><path d="M.3.600l5.700 3.400-5.700 3.400z" fill="#8a8a8a"/></svg>
<div class="abs" style="left:0;top:282.6px;width:179.500px;height:14.100px;background:linear-gradient(#fefefe,#ececec 50%,#e4e4e4 85%,#f0f0f0);border-bottom:1px solid #bdbdbd"></div>
<span class="t sb" style="left:16.300px;top:284.0px">Appliances</span>
<svg style="left:164px;top:284.8px" width="10" height="10" viewBox="0 0 10 10"><circle cx="5" cy="5" r="4.200" fill="#757575"/><path d="M3.300 3.300l3.400 3.400M6.700 3.300l-3.400 3.400" stroke="#f0f0f0" stroke-width="1"/></svg>
<div class="abs" style="left:0;top:296.7px;width:179.500px;height:14.100px;background:linear-gradient(#fefefe,#ececec 50%,#e4e4e4 85%,#f0f0f0);border-bottom:1px solid #bdbdbd"></div>
<span class="t sb" style="left:16.300px;top:298.1px">Building core</span>
<svg style="left:164px;top:298.9px" width="10" height="10" viewBox="0 0 10 10"><circle cx="5" cy="5" r="4.200" fill="#757575"/><path d="M3.300 3.300l3.400 3.400M6.700 3.300l-3.400 3.400" stroke="#f0f0f0" stroke-width="1"/></svg>
<div class="abs" style="left:0;top:310.7px;width:179.500px;height:14.100px;background:linear-gradient(#fefefe,#ececec 50%,#e4e4e4 85%,#f0f0f0);border-bottom:1px solid #bdbdbd"></div>
<span class="t sb" style="left:16.300px;top:312.1px">Doors</span>
<svg style="left:164px;top:312.9px" width="10" height="10" viewBox="0 0 10 10"><circle cx="5" cy="5" r="4.200" fill="#757575"/><path d="M3.300 3.300l3.400 3.400M6.700 3.300l-3.400 3.400" stroke="#f0f0f0" stroke-width="1"/></svg>
<div class="abs" style="left:0;top:324.8px;width:179.500px;height:14.100px;background:linear-gradient(#86bcf2,#a9d2f8 50%,#cfe6fd);border-bottom:1px solid #9cbfe6"></div>
<span class="t sb" style="left:16.300px;top:326.2px">Windows</span>
<svg style="left:164px;top:327.0px" width="10" height="10" viewBox="0 0 10 10"><circle cx="5" cy="5" r="4.200" fill="#757575"/><path d="M3.300 3.300l3.400 3.400M6.700 3.300l-3.400 3.400" stroke="#f0f0f0" stroke-width="1"/></svg>
<div class="abs" style="left:0;top:338.8px;width:179.500px;height:14.100px;background:linear-gradient(#fefefe,#ececec 50%,#e4e4e4 85%,#f0f0f0);border-bottom:1px solid #bdbdbd"></div>
<span class="t sb" style="left:16.300px;top:340.2px">Walls, shell and structure</span>
<svg style="left:164px;top:341.0px" width="10" height="10" viewBox="0 0 10 10"><circle cx="5" cy="5" r="4.200" fill="#757575"/><path d="M3.300 3.300l3.400 3.400M6.700 3.300l-3.400 3.400" stroke="#f0f0f0" stroke-width="1"/></svg>
<div class="abs" style="left:0;top:352.9px;width:179.500px;height:14.100px;background:linear-gradient(#fefefe,#ececec 50%,#e4e4e4 85%,#f0f0f0);border-bottom:1px solid #bdbdbd"></div>
<span class="t sb" style="left:16.300px;top:354.3px">Tables</span>
<svg style="left:164px;top:355.1px" width="10" height="10" viewBox="0 0 10 10"><circle cx="5" cy="5" r="4.200" fill="#757575"/><path d="M3.300 3.300l3.400 3.400M6.700 3.300l-3.400 3.400" stroke="#f0f0f0" stroke-width="1"/></svg>
<div class="abs" style="left:0;top:367.0px;width:179.500px;height:14.100px;background:linear-gradient(#fefefe,#ececec 50%,#e4e4e4 85%,#f0f0f0);border-bottom:1px solid #bdbdbd"></div>
<span class="t sb" style="left:16.300px;top:368.4px">Drawing Shapes</span>
<svg style="left:164px;top:369.2px" width="10" height="10" viewBox="0 0 10 10"><circle cx="5" cy="5" r="4.200" fill="#757575"/><path d="M3.300 3.300l3.400 3.400M6.700 3.300l-3.400 3.400" stroke="#f0f0f0" stroke-width="1"/></svg>
<div class="abs" style="left:0;top:381.200px;width:180px;height:176px;background:#cedbe4"></div>
<div class="abs" style="left:9.500px;top:383.8px;width:25px;height:24.3px;border-radius:2px;background:linear-gradient(170deg,#f6f9fd,#dde9f6 55%,#b4cfee);border:1px solid #86a8da;border-bottom:1.5px solid #5f8cc4;box-shadow:0 0 0 1.8px #8dbcf2;"></div>
<svg style="left:8.500px;top:382.6px" width="26" height="26" viewBox="0 0 26 26"><rect x="20.500" y="1.500" width="4" height="4" fill="#e8f0fa" stroke="#4f7cc0" stroke-width=".8"/><path d="M21.500 3.500l1 1 1.500-2" fill="none" stroke="#4f7cc0" stroke-width=".7"/><path d="M5 9.500v7M21 9.500v7" stroke="#8a8a8a" stroke-width=".9"/><rect x="5" y="12" width="16" height="2" fill="#fff" stroke="#8a8a8a" stroke-width=".7"/></svg>
<span class="t ss" style="left:42.300px;top:392.3px;color:#1a3a9a;">Window</span>
<div class="abs" style="left:9.500px;top:411.9px;width:25px;height:24.3px;border-radius:2px;background:linear-gradient(170deg,#f6f9fd,#dde9f6 55%,#b4cfee);border:1px solid #86a8da;border-bottom:1.5px solid #5f8cc4;"></div>
<svg style="left:8.500px;top:410.7px" width="26" height="26" viewBox="0 0 26 26"><rect x="20.500" y="1.500" width="4" height="4" fill="#e8f0fa" stroke="#4f7cc0" stroke-width=".8"/><path d="M21.500 3.500l1 1 1.500-2" fill="none" stroke="#4f7cc0" stroke-width=".7"/><rect x="5" y="11" width="16" height="4.500" fill="#fff" stroke="#8a8a8a" stroke-width=".7"/><path d="M5 13.300h16" stroke="#8a8a8a" stroke-width=".6"/></svg>
<span class="t ss" style="left:42.300px;top:420.4px;">Window, sill</span>
<div class="abs" style="left:9.500px;top:440.0px;width:25px;height:24.3px;border-radius:2px;background:linear-gradient(170deg,#f6f9fd,#dde9f6 55%,#b4cfee);border:1px solid #86a8da;border-bottom:1.5px solid #5f8cc4;"></div>
<svg style="left:8.500px;top:438.8px" width="26" height="26" viewBox="0 0 26 26"><rect x="20.500" y="1.500" width="4" height="4" fill="#e8f0fa" stroke="#4f7cc0" stroke-width=".8"/><path d="M21.500 3.500l1 1 1.500-2" fill="none" stroke="#4f7cc0" stroke-width=".7"/><path d="M5 9.500v7M21 9.500v7" stroke="#8a8a8a" stroke-width=".9"/><rect x="5" y="12" width="16" height="2" fill="#fff" stroke="#8a8a8a" stroke-width=".7"/></svg>
<span class="t ss" style="left:42.300px;top:448.5px;">Window, sash</span>
<div class="abs" style="left:9.500px;top:468.1px;width:25px;height:24.3px;border-radius:2px;background:linear-gradient(170deg,#f6f9fd,#dde9f6 55%,#b4cfee);border:1px solid #86a8da;border-bottom:1.5px solid #5f8cc4;"></div>
<svg style="left:8.500px;top:466.9px" width="26" height="26" viewBox="0 0 26 26"><rect x="20.500" y="1.500" width="4" height="4" fill="#e8f0fa" stroke="#4f7cc0" stroke-width=".8"/><path d="M21.500 3.500l1 1 1.500-2" fill="none" stroke="#4f7cc0" stroke-width=".7"/><rect x="5" y="11" width="16" height="4.500" fill="#fff" stroke="#8a8a8a" stroke-width=".7"/><path d="M5 13.300h16" stroke="#8a8a8a" stroke-width=".6"/></svg>
<span class="t ss" style="left:42.300px;top:476.6px;">Window, sash, sill</span>
<div class="abs" style="left:9.500px;top:496.2px;width:25px;height:24.3px;border-radius:2px;background:linear-gradient(170deg,#f6f9fd,#dde9f6 55%,#b4cfee);border:1px solid #86a8da;border-bottom:1.5px solid #5f8cc4;"></div>
<svg style="left:8.500px;top:495.0px" width="26" height="26" viewBox="0 0 26 26"><rect x="20.500" y="1.500" width="4" height="4" fill="#e8f0fa" stroke="#4f7cc0" stroke-width=".8"/><path d="M21.500 3.500l1 1 1.500-2" fill="none" stroke="#4f7cc0" stroke-width=".7"/><rect x="4" y="10" width="2.500" height="6" fill="#fff" stroke="#7a7a7a" stroke-width=".7"/><rect x="19.500" y="10" width="2.500" height="6" fill="#fff" stroke="#7a7a7a" stroke-width=".7"/><rect x="6.500" y="12" width="13" height="2" fill="#fff" stroke="#8a8a8a" stroke-width=".7"/></svg>
<span class="t ss" style="left:42.300px;top:504.7px;">Window, frame</span>
<div class="abs" style="left:9.500px;top:524.3px;width:25px;height:24.3px;border-radius:2px;background:linear-gradient(170deg,#f6f9fd,#dde9f6 55%,#b4cfee);border:1px solid #86a8da;border-bottom:1.5px solid #5f8cc4;"></div>
<svg style="left:8.500px;top:523.1px" width="26" height="26" viewBox="0 0 26 26"><rect x="20.500" y="1.500" width="4" height="4" fill="#e8f0fa" stroke="#4f7cc0" stroke-width=".8"/><path d="M21.500 3.500l1 1 1.500-2" fill="none" stroke="#4f7cc0" stroke-width=".7"/><rect x="4" y="10" width="2.500" height="6" fill="#fff" stroke="#7a7a7a" stroke-width=".7"/><rect x="19.500" y="10" width="2.500" height="6" fill="#fff" stroke="#7a7a7a" stroke-width=".7"/><rect x="6.500" y="12" width="13" height="2" fill="#fff" stroke="#8a8a8a" stroke-width=".7"/></svg>
<span class="t ss" style="left:42.300px;top:532.8px;">Window, frame, sill</span>
<div class="abs" style="left:9.500px;top:552.4px;width:25px;height:24.3px;border-radius:2px;background:linear-gradient(170deg,#f6f9fd,#dde9f6 55%,#b4cfee);border:1px solid #86a8da;border-bottom:1.5px solid #5f8cc4;"></div>
<svg style="left:8.500px;top:551.2px" width="26" height="26" viewBox="0 0 26 26"><rect x="20.500" y="1.500" width="4" height="4" fill="#e8f0fa" stroke="#4f7cc0" stroke-width=".8"/><path d="M21.500 3.500l1 1 1.500-2" fill="none" stroke="#4f7cc0" stroke-width=".7"/><rect x="4" y="10" width="2.500" height="6" fill="#fff" stroke="#7a7a7a" stroke-width=".7"/><rect x="19.500" y="10" width="2.500" height="6" fill="#fff" stroke="#7a7a7a" stroke-width=".7"/><rect x="6.500" y="12" width="13" height="2" fill="#fff" stroke="#8a8a8a" stroke-width=".7"/></svg>
<div class="abs" style="left:179.500px;top:106px;width:1px;height:451px;background:#a8a8a8"></div>
<div class="abs" style="left:180px;top:545.500px;width:820px;height:12px;background:linear-gradient(#fdfdfd,#f1f1f1);border-top:1px solid #8f9c9c"></div>
<div class="abs" style="left:180px;top:546px;width:13.500px;height:11.500px;background:linear-gradient(#fafafa,#e0e0e0);border-right:1.5px solid #4a4a4a;border-left:1px solid #9a9a9a;border-top:1px solid #7a7a7a"></div>
<div class="abs" style="left:185px;top:548.500px;width:1.200px;height:6px;background:#9a9a9a"></div><div class="abs" style="left:188px;top:548.500px;width:1.200px;height:6px;background:#9a9a9a"></div>
<div class="abs" style="left:194px;top:546px;width:35.500px;height:11.500px;background:linear-gradient(#f2f2f2,#e2e2e2);border-right:1px solid #c0c0c0"></div>
<svg style="left:198px;top:547px" width="30" height="9" viewBox="0 0 30 9"><path d="M7 1v7l-5.500-3.500z" fill="#b4b4b4"/><path d="M20.500 1v7l5.500-3.500z" fill="#b4b4b4"/></svg>
<div class="abs" style="left:230px;top:546px;width:74px;height:11.500px;background:#fbfbfb"></div>
<span class="t " style="left:233.2px;top:547.8px;font-size:8.50px;letter-spacing:0.00px;color:#2a2a2a">Custom</span>
<span class="t " style="left:265.3px;top:547.8px;font-size:8.50px;transform:scaleX(0.876);transform-origin:0 0;color:#2a2a2a">59%</span>
<svg style="left:293px;top:546.500px" width="9" height="11" viewBox="0 0 9 11"><path d="M1.800 4l2.700-2.500 2.700 2.500M1.800 7l2.700 2.500 2.700-2.500" fill="none" stroke="#3a3a3a" stroke-width="1"/></svg>
<div class="abs" style="left:304px;top:546px;width:35px;height:11.500px;background:linear-gradient(#8a8a8a,#a4a4a4 50%,#8a8a8a);border-left:1px solid #6a6a6a;border-right:1px solid #6a6a6a"></div>
<div class="abs" style="left:309.8px;top:547.800px;width:6.200px;height:8px;background:#f4f4f4;border:.5px solid #7a7a7a"></div>
<div class="abs" style="left:318.0px;top:547.800px;width:6.200px;height:8px;background:#f4f4f4;border:.5px solid #7a7a7a"></div>
<div class="abs" style="left:326.3px;top:547.800px;width:6.200px;height:8px;background:#f4f4f4;border:.5px solid #7a7a7a"></div>
<div class="abs" style="left:0;top:557.500px;width:1000px;height:14.500px;background:#ececec;border-top:1px solid #c4c4c4"></div>
<span class="t sbar" style="left:6.8px;top:558.2px;font-size:8.90px;transform:scaleX(0.960);transform-origin:0 0;">Ready</span>
<span class="t sbar" style="left:168.3px;top:558.2px;font-size:8.90px;transform:scaleX(0.859);transform-origin:0 0;">W:</span>
<span class="t sbar" style="left:181.3px;top:558.2px;font-size:8.90px;letter-spacing:0.41px;">60.84,</span>
<span class="t sbar" style="left:214.0px;top:558.2px;font-size:8.90px;transform:scaleX(0.831);transform-origin:0 0;">H:</span>
<span class="t sbar" style="left:225.5px;top:558.2px;font-size:8.90px;letter-spacing:0.34px;">1.24,</span>
<span class="t sbar" style="left:252.7px;top:558.2px;font-size:8.90px;transform:scaleX(0.991);transform-origin:0 0;">Angle:</span>
<span class="t sbar" style="left:282.0px;top:558.2px;font-size:8.90px;transform:scaleX(0.982);transform-origin:0 0;">1.57</span>
<span class="t sbar" style="left:302.5px;top:558.2px;font-size:8.90px;letter-spacing:0.08px;">rad</span>
<span class="t sbar" style="left:424.0px;top:558.2px;font-size:8.90px;transform:scaleX(0.931);transform-origin:0 0;">M:</span>
<span class="t sbar" style="left:436.7px;top:558.2px;font-size:8.90px;transform:scaleX(0.809);transform-origin:0 0;">[</span>
<span class="t sbar" style="left:442.3px;top:558.2px;font-size:8.90px;letter-spacing:0.33px;">305.03,</span>
<span class="t sbar" style="left:478.0px;top:558.2px;font-size:8.90px;letter-spacing:0.43px;">157.25</span>
<span class="t sbar" style="left:511.8px;top:558.2px;font-size:8.90px;transform:scaleX(0.809);transform-origin:0 0;">]</span>
<svg style="left:976px;top:545px" width="24" height="12" viewBox="0 0 24 12"><rect x="1.500" y="1.500" width="10" height="9.500" fill="#dfe8f6" stroke="#7a9ad0" stroke-width=".8"/><path d="M6.500 2.500v7.500M2.500 6.200h8" stroke="#3a62b0" stroke-width="1"/><circle cx="6.500" cy="6.200" r="1.700" fill="#9ab8e6" stroke="#3a62b0" stroke-width=".6"/><rect x="13.500" y="1.500" width="9" height="9.500" fill="#eef2f8" stroke="#9ab0d4" stroke-width=".8"/><rect x="16.500" y="3.500" width="3" height="5.500" fill="#fff" stroke="#9ab0d4" stroke-width=".6"/></svg>
<div class="abs" style="left:0;top:570.300px;width:1000px;height:1.700px;background:linear-gradient(#bcbcbc,#4a4a4a)"></div>
<div class="abs" style="left:812.400px;top:70px;width:188px;height:256px;background:#efefef;box-shadow:-1px 0 0 #b4b4b4"></div>
<div class="abs" style="left:985px;top:326px;width:15px;height:219.500px;background:#fafafa;border-left:1px solid #dcdcdc"></div>
<div class="abs" style="left:990.500px;top:330px;width:5.500px;height:203px;background:#b9b9b9;border-radius:3px"></div>
<div class="abs" style="left:991px;top:323px;width:9px;height:12px;background:linear-gradient(#e0e0e0,#cfcfcf);border-radius:3px 0 0 3px"></div>
<div class="abs" style="left:812.400px;top:70.3px;width:188px;height:11.600px;background:linear-gradient(#eeeeee,#e4e4e4 60%,#d8d8d8);border-radius:4px 0 0 0;box-shadow:0 1px 1.500px rgba(0,0,0,.28),0 -.5px 0 #c8c8c8"></div>
<svg style="left:834.300px;top:72.1px" width="7" height="8"><path d="M.3.300l5.600 3.400-5.600 3.400z" fill="#7a7a7a"/></svg>
<span class="t ph" style="left:842px;top:71.6px">Behaviour</span>
<div class="abs" style="left:812.400px;top:82.6px;width:188px;height:11.600px;background:linear-gradient(#eeeeee,#e4e4e4 60%,#d8d8d8);border-radius:4px 0 0 0;box-shadow:0 1px 1.500px rgba(0,0,0,.28),0 -.5px 0 #c8c8c8"></div>
<svg style="left:834.300px;top:84.4px" width="7" height="8"><path d="M.3.300l5.600 3.400-5.600 3.400z" fill="#7a7a7a"/></svg>
<span class="t ph" style="left:842px;top:83.9px">Layers</span>
<div class="abs" style="left:812.400px;top:95.2px;width:188px;height:11.600px;background:linear-gradient(#eeeeee,#e4e4e4 60%,#d8d8d8);border-radius:4px 0 0 0;box-shadow:0 1px 1.500px rgba(0,0,0,.28),0 -.5px 0 #c8c8c8"></div>
<svg style="left:834px;top:97.4px" width="8" height="7"><path d="M.3.500h6.800l-3.400 5.600z" fill="#7a7a7a"/></svg>
<span class="t ph" style="left:842px;top:96.5px">Line</span>
<div class="abs" style="left:817px;top:72.200px;width:8px;height:8px;border-radius:50%;background:#e6e6e6;box-shadow:0 0 0 .5px #d4d4d4"></div>
<div class="abs" style="left:812.900px;top:107px;width:187px;height:27px;background:#f5f5f5;border-bottom:1px solid #e2e2e2"></div>
<div class="abs" style="left:815.800px;top:107px;width:24.500px;height:26.500px;background:#e6e6e6"></div>
<svg style="left:812px;top:107px" width="110" height="27" viewBox="812 107 110 27"><defs><linearGradient id="sqg" x1="0" y1="0" x2="0" y2="1"><stop offset="0" stop-color="#f4f4f4"/><stop offset="1" stop-color="#aaaaaa"/></linearGradient></defs><rect x="820.5" y="121.3" width="14.5" height="2.4" fill="#2388dc"/><rect x="820.5" y="123.7" width="14.5" height="1.3" fill="#6cc0f2"/><path d="M825 120.4l.9-2.300 7.300-6.100 1.500 1.600-7.400 6.100z" fill="#5a3d22"/><path d="M833 112.200l1.500 1.600 1.200-1q.4-.9-.3-1.500t-1.400-.1z" fill="#e0a040"/><path d="M825 120.400l.9-2.300 1.300 1.600z" fill="#222"/><ellipse cx="853" cy="123.400" rx="6.400" ry="2.200" fill="#2388dc"/><path d="M850.500 115q3.200-.3 3.200 3.500v5" fill="none" stroke="#2388dc" stroke-width="2.500"/><path d="M845.600 114.200l3.300-2.400 3 3.700-3.300 2.600z" fill="#b8b8b8" stroke="#6a6a6a" stroke-width=".7"/><path d="M846.500 113.200q1.500-2.500 3.500-1" fill="none" stroke="#6a6a6a" stroke-width=".6"/><rect x="872.3" y="114.500" width="9.800" height="8.600" rx="1" fill="#7cb8f4" opacity=".75"/><rect x="871" y="113.200" width="9.600" height="8.300" rx=".8" fill="url(#sqg)" stroke="#8a8a8a" stroke-width=".8"/></svg>
<span class="t" style="left:895.9px;top:108.5px;font:bold 19px 'Liberation Serif',serif;color:#2d5fa0;transform:scaleX(.88);transform-origin:0 0">A</span>
<div class="abs" style="left:820.700px;top:143.300px;width:8.800px;height:9px;background:#fff;border-radius:2px;box-shadow:0 0 0 .6px #b4b4b4,0 .5px 1px rgba(0,0,0,.2)"></div>
<svg style="left:821px;top:143.500px" width="9" height="9" viewBox="0 0 9 9"><path d="M2 4.700l1.700 2 2.800-5" fill="none" stroke="#222" stroke-width="1"/></svg>
<span class="t" style="left:834px;top:143.600px;font-size:9.200px;font-weight:bold;color:#1a1a1a">Stroke</span>
<div class="abs" style="left:875.500px;top:140.400px;width:37.200px;height:15px;background:#bcbcbc;box-shadow:0 0 0 .5px #a8a8a8"></div>
<div class="abs" style="left:879.500px;top:144px;width:29.500px;height:7.800px;background:#a6a6a6;border:1px solid #6e6e6e"></div>
<div class="abs" style="left:955.300px;top:162.400px;width:36.200px;height:20px;background:#fcfcfc;border:1px solid #d0d0d0;border-radius:2px"></div>
<div class="abs" style="left:991px;top:185.0px;width:1px;height:9.5px;background:#9cc0ea"></div>
<div class="abs" style="left:991px;top:265.0px;width:1px;height:9.5px;background:#9cc0ea"></div>
<div class="abs" style="left:991px;top:285.5px;width:1px;height:8.0px;background:#9cc0ea"></div>
<div class="abs" style="left:813.200px;top:164.700px;width:178px;height:305.200px;background:#ececec;border-radius:4.500px;box-shadow:0 0 0 .5px rgba(0,0,0,.22),0 3px 9px rgba(0,0,0,.28)"></div>
<div class="abs" style="left:813.200px;top:164.700px;width:178px;height:39.800px;background:#f5f5f5;border-radius:4.500px 4.500px 0 0;border-bottom:1px solid #dadada"></div>
<div class="abs" style="left:817.8px;top:167.200px;width:8.400px;height:8.400px;border-radius:50%;background:#e1e1e1;box-shadow:0 0 0 .5px #d6d6d6"></div>
<div class="abs" style="left:832.1px;top:167.200px;width:8.400px;height:8.400px;border-radius:50%;background:#e1e1e1;box-shadow:0 0 0 .5px #d6d6d6"></div>
<div class="abs" style="left:846.3px;top:167.200px;width:8.400px;height:8.400px;border-radius:50%;background:#e1e1e1;box-shadow:0 0 0 .5px #d6d6d6"></div>
<span class="t" style="left:889.200px;top:166.700px;font-size:8.950px;color:#b2b2b2">Colors</span>
<div class="abs" style="left:941.400px;top:177.800px;width:24.500px;height:26.500px;background:#e2e2e2;border-radius:3px 3px 0 0"></div>
<div class="abs" style="left:821.200px;top:181.600px;width:15px;height:15px;border-radius:50%;background:radial-gradient(circle,#fff 0,rgba(255,255,255,.6) 30%,rgba(255,255,255,0) 68%),conic-gradient(from 90deg,#ff3a3a,#ff3ad8,#6a5cff,#3ab8ff,#3affc0,#7dff3a,#fff23a,#ff9a3a,#ff3a3a);box-shadow:0 0 0 .6px #c0c0c0"></div>
<svg style="left:813px;top:178px" width="178" height="26" viewBox="813 178 178 26"><rect x="845" y="182.2" width="17.600" height="3.300" rx="1" fill="#f9b6b0"/><rect x="845" y="182.2" width="7.0" height="3.300" rx="1" fill="#f0392c"/><circle cx="852.0" cy="184.1" r="1.700" fill="#fff" stroke="#aaa" stroke-width=".4"/><rect x="845" y="187.4" width="17.600" height="3.300" rx="1" fill="#a9e2b0"/><rect x="845" y="187.4" width="9.3" height="3.300" rx="1" fill="#35b845"/><circle cx="854.3" cy="189.3" r="1.700" fill="#fff" stroke="#aaa" stroke-width=".4"/><rect x="845" y="192.6" width="17.600" height="3.300" rx="1" fill="#a9c2f8"/><rect x="845" y="192.6" width="11.6" height="3.300" rx="1" fill="#2f6df0"/><circle cx="856.6" cy="194.5" r="1.700" fill="#fff" stroke="#aaa" stroke-width=".4"/><rect x="871" y="181.500" width="11" height="12" rx="1.500" fill="#fafafa" stroke="#c4c4c4" stroke-width=".7"/><rect x="876.500" y="188" width="10" height="9" rx="1.500" fill="#fafafa" stroke="#c4c4c4" stroke-width=".7"/><rect x="872.4" y="182.9" width="3.200" height="3.200" rx=".8" fill="#f04030"/><rect x="876.9" y="182.9" width="3.200" height="3.200" rx=".8" fill="#f8b020"/><rect x="872.4" y="187.4" width="3.200" height="3.200" rx=".8" fill="#30a0f0"/><rect x="876.9" y="187.4" width="3.200" height="3.200" rx=".8" fill="#40c040"/><rect x="878.7" y="190.3" width="2.600" height="2.400" rx=".6" fill="#333"/><rect x="882.7" y="190.3" width="2.600" height="2.400" rx=".6" fill="#333"/><rect x="878.7" y="193.6" width="2.600" height="2.400" rx=".6" fill="#333"/><rect x="882.7" y="193.6" width="2.600" height="2.400" rx=".6" fill="#333"/><rect x="894.500" y="182" width="18" height="15" rx="1" fill="#fff" stroke="#cfcfcf" stroke-width=".7"/><rect x="896" y="183.500" width="15" height="12" fill="#c8a0c8"/><rect x="896" y="185.500" width="15" height="3" fill="#f0a090"/><rect x="896" y="188" width="15" height="2" fill="#f8d870"/><path d="M896 191q3-3 5-1t4 0 6 0v2.500h-15z" fill="#2a2a3a"/><rect x="896" y="193" width="15" height="2.500" fill="#b088b8"/><rect x="921.500" y="190" width="14.500" height="7.300" rx="1" fill="#f0f0f0" stroke="#cfcfcf" stroke-width=".6"/><rect x="922.3" y="184.500" width="2" height="7.500" fill="#d83020"/><path d="M922.3 184.500l1-2.500 1 2.500z" fill="#e0b080"/><rect x="924.5" y="184.500" width="2" height="7.500" fill="#f0e020"/><path d="M924.5 184.500l1-2.500 1 2.500z" fill="#e0b080"/><rect x="926.7" y="184.500" width="2" height="7.500" fill="#30b040"/><path d="M926.7 184.500l1-2.500 1 2.500z" fill="#e0b080"/><rect x="928.9" y="184.500" width="2" height="7.500" fill="#2890e0"/><path d="M928.9 184.500l1-2.500 1 2.500z" fill="#e0b080"/><rect x="931.1" y="184.500" width="2" height="7.500" fill="#3030c0"/><path d="M931.1 184.500l1-2.500 1 2.500z" fill="#e0b080"/><rect x="933.3" y="184.500" width="2" height="7.500" fill="#d030d0"/><path d="M933.3 184.500l1-2.500 1 2.500z" fill="#e0b080"/><rect x="945.800" y="181.400" width="15" height="15" rx="1.800" fill="#f4f4f4" stroke="#8a8a8a" stroke-width="1"/><circle cx="948.5" cy="184.2" r="1.300" fill="#f05050"/><circle cx="951.7" cy="184.2" r="1.300" fill="#f8d060"/><circle cx="954.9" cy="184.2" r="1.300" fill="#90d890"/><circle cx="958.1" cy="184.2" r="1.300" fill="#80b0e8"/><circle cx="948.5" cy="187.4" r="1.300" fill="#e82020"/><circle cx="951.7" cy="187.4" r="1.300" fill="#f0a010"/><circle cx="954.9" cy="187.4" r="1.300" fill="#30b030"/><circle cx="958.1" cy="187.4" r="1.300" fill="#1858c8"/><circle cx="948.5" cy="190.6" r="1.300" fill="#a03010"/><circle cx="951.7" cy="190.6" r="1.300" fill="#a06010"/><circle cx="954.9" cy="190.6" r="1.300" fill="#107010"/><circle cx="958.1" cy="190.6" r="1.300" fill="#081870"/><circle cx="948.5" cy="193.8" r="1.300" fill="#101010"/><circle cx="951.7" cy="193.8" r="1.300" fill="#404040"/><circle cx="954.9" cy="193.8" r="1.300" fill="#a0a0a0"/><circle cx="958.1" cy="193.8" r="1.300" fill="#f8f8f8"/></svg>
<div class="abs" style="left:816.300px;top:252.300px;width:170px;height:135px;background:#fff;box-shadow:0 0 0 .5px #d8d8d8"></div>
<svg style="left:813px;top:250px" width="178" height="140" viewBox="813 250 178 140"><rect x="891.700" y="252.700" width="19.400" height="19.400" rx="1" fill="#9ccaf6"/><rect x="818.7" y="254.9" width="14.600" height="14.800" fill="#ffffff" stroke="rgba(90,90,90,.55)" stroke-width=".9"/><rect x="837.5" y="254.9" width="14.600" height="14.800" fill="#e6e6e6" stroke="rgba(90,90,90,.55)" stroke-width=".9"/><rect x="856.3" y="254.9" width="14.600" height="14.800" fill="#d3d3d3" stroke="rgba(90,90,90,.55)" stroke-width=".9"/><rect x="875.1" y="254.9" width="14.600" height="14.800" fill="#c0c0c0" stroke="rgba(90,90,90,.55)" stroke-width=".9"/><rect x="893.9" y="254.9" width="14.600" height="14.800" fill="#a9a9a9" stroke="rgba(90,90,90,.55)" stroke-width=".9"/><rect x="912.7" y="254.9" width="14.600" height="14.800" fill="#808080" stroke="rgba(90,90,90,.55)" stroke-width=".9"/><rect x="931.5" y="254.9" width="14.600" height="14.800" fill="#595959" stroke="rgba(90,90,90,.55)" stroke-width=".9"/><rect x="950.3" y="254.9" width="14.600" height="14.800" fill="#2b2b2b" stroke="rgba(90,90,90,.55)" stroke-width=".9"/><rect x="969.1" y="254.9" width="14.600" height="14.800" fill="#000000" stroke="rgba(90,90,90,.55)" stroke-width=".9"/><rect x="818.7" y="274.1" width="14.600" height="14.800" fill="#ffaaaa" stroke="rgba(90,90,90,.55)" stroke-width=".9"/><rect x="837.5" y="274.1" width="14.600" height="14.800" fill="#ffd0a8" stroke="rgba(90,90,90,.55)" stroke-width=".9"/><rect x="856.3" y="274.1" width="14.600" height="14.800" fill="#ffe4a8" stroke="rgba(90,90,90,.55)" stroke-width=".9"/><rect x="875.1" y="274.1" width="14.600" height="14.800" fill="#fffaa2" stroke="rgba(90,90,90,.55)" stroke-width=".9"/><rect x="893.9" y="274.1" width="14.600" height="14.800" fill="#fafaa2" stroke="rgba(90,90,90,.55)" stroke-width=".9"/><rect x="912.7" y="274.1" width="14.600" height="14.800" fill="#b9fca9" stroke="rgba(90,90,90,.55)" stroke-width=".9"/><rect x="931.5" y="274.1" width="14.600" height="14.800" fill="#8fe098" stroke="rgba(90,90,90,.55)" stroke-width=".9"/><rect x="950.3" y="274.1" width="14.600" height="14.800" fill="#a2f840" stroke="rgba(90,90,90,.55)" stroke-width=".9"/><rect x="969.1" y="274.1" width="14.600" height="14.800" fill="#a9fce8" stroke="rgba(90,90,90,.55)" stroke-width=".9"/><rect x="818.7" y="293.3" width="14.600" height="14.800" fill="#fa2818" stroke="rgba(90,90,90,.55)" stroke-width=".9"/><rect x="837.5" y="293.3" width="14.600" height="14.800" fill="#fa8820" stroke="rgba(90,90,90,.55)" stroke-width=".9"/><rect x="856.3" y="293.3" width="14.600" height="14.800" fill="#fdb92a" stroke="rgba(90,90,90,.55)" stroke-width=".9"/><rect x="875.1" y="293.3" width="14.600" height="14.800" fill="#fdec32" stroke="rgba(90,90,90,.55)" stroke-width=".9"/><rect x="893.9" y="293.3" width="14.600" height="14.800" fill="#e0e832" stroke="rgba(90,90,90,.55)" stroke-width=".9"/><rect x="912.7" y="293.3" width="14.600" height="14.800" fill="#5ad840" stroke="rgba(90,90,90,.55)" stroke-width=".9"/><rect x="931.5" y="293.3" width="14.600" height="14.800" fill="#20b042" stroke="rgba(90,90,90,.55)" stroke-width=".9"/><rect x="950.3" y="293.3" width="14.600" height="14.800" fill="#2ad879" stroke="rgba(90,90,90,.55)" stroke-width=".9"/><rect x="969.1" y="293.3" width="14.600" height="14.800" fill="#32d9b8" stroke="rgba(90,90,90,.55)" stroke-width=".9"/><rect x="818.7" y="312.5" width="14.600" height="14.800" fill="#c02010" stroke="rgba(90,90,90,.55)" stroke-width=".9"/><rect x="837.5" y="312.5" width="14.600" height="14.800" fill="#c84818" stroke="rgba(90,90,90,.55)" stroke-width=".9"/><rect x="856.3" y="312.5" width="14.600" height="14.800" fill="#c8801a" stroke="rgba(90,90,90,.55)" stroke-width=".9"/><rect x="875.1" y="312.5" width="14.600" height="14.800" fill="#c8a020" stroke="rgba(90,90,90,.55)" stroke-width=".9"/><rect x="893.9" y="312.5" width="14.600" height="14.800" fill="#a9b920" stroke="rgba(90,90,90,.55)" stroke-width=".9"/><rect x="912.7" y="312.5" width="14.600" height="14.800" fill="#208018" stroke="rgba(90,90,90,.55)" stroke-width=".9"/><rect x="931.5" y="312.5" width="14.600" height="14.800" fill="#086818" stroke="rgba(90,90,90,.55)" stroke-width=".9"/><rect x="950.3" y="312.5" width="14.600" height="14.800" fill="#088040" stroke="rgba(90,90,90,.55)" stroke-width=".9"/><rect x="969.1" y="312.5" width="14.600" height="14.800" fill="#087870" stroke="rgba(90,90,90,.55)" stroke-width=".9"/><rect x="818.7" y="331.7" width="14.600" height="14.800" fill="#c1f5fd" stroke="rgba(90,90,90,.55)" stroke-width=".9"/><rect x="837.5" y="331.7" width="14.600" height="14.800" fill="#a9ddfd" stroke="rgba(90,90,90,.55)" stroke-width=".9"/><rect x="856.3" y="331.7" width="14.600" height="14.800" fill="#b9c9f0" stroke="rgba(90,90,90,.55)" stroke-width=".9"/><rect x="875.1" y="331.7" width="14.600" height="14.800" fill="#90a9d8" stroke="rgba(90,90,90,.55)" stroke-width=".9"/><rect x="893.9" y="331.7" width="14.600" height="14.800" fill="#edadfd" stroke="rgba(90,90,90,.55)" stroke-width=".9"/><rect x="912.7" y="331.7" width="14.600" height="14.800" fill="#fdaddd" stroke="rgba(90,90,90,.55)" stroke-width=".9"/><rect x="931.5" y="331.7" width="14.600" height="14.800" fill="#fde1d9" stroke="rgba(90,90,90,.55)" stroke-width=".9"/><rect x="950.3" y="331.7" width="14.600" height="14.800" fill="#d9b589" stroke="rgba(90,90,90,.55)" stroke-width=".9"/><rect x="969.1" y="331.7" width="14.600" height="14.800" fill="#d1c1a9" stroke="rgba(90,90,90,.55)" stroke-width=".9"/><rect x="818.7" y="350.9" width="14.600" height="14.800" fill="#1ae9e9" stroke="rgba(90,90,90,.55)" stroke-width=".9"/><rect x="837.5" y="350.9" width="14.600" height="14.800" fill="#2aa9e9" stroke="rgba(90,90,90,.55)" stroke-width=".9"/><rect x="856.3" y="350.9" width="14.600" height="14.800" fill="#2a5ad9" stroke="rgba(90,90,90,.55)" stroke-width=".9"/><rect x="875.1" y="350.9" width="14.600" height="14.800" fill="#401888" stroke="rgba(90,90,90,.55)" stroke-width=".9"/><rect x="893.9" y="350.9" width="14.600" height="14.800" fill="#a941c1" stroke="rgba(90,90,90,.55)" stroke-width=".9"/><rect x="912.7" y="350.9" width="14.600" height="14.800" fill="#e941a1" stroke="rgba(90,90,90,.55)" stroke-width=".9"/><rect x="931.5" y="350.9" width="14.600" height="14.800" fill="#d18d79" stroke="rgba(90,90,90,.55)" stroke-width=".9"/><rect x="950.3" y="350.9" width="14.600" height="14.800" fill="#a17949" stroke="rgba(90,90,90,.55)" stroke-width=".9"/><rect x="969.1" y="350.9" width="14.600" height="14.800" fill="#918979" stroke="rgba(90,90,90,.55)" stroke-width=".9"/><rect x="818.7" y="370.1" width="14.600" height="14.800" fill="#087878" stroke="rgba(90,90,90,.55)" stroke-width=".9"/><rect x="837.5" y="370.1" width="14.600" height="14.800" fill="#185878" stroke="rgba(90,90,90,.55)" stroke-width=".9"/><rect x="856.3" y="370.1" width="14.600" height="14.800" fill="#082888" stroke="rgba(90,90,90,.55)" stroke-width=".9"/><rect x="875.1" y="370.1" width="14.600" height="14.800" fill="#081060" stroke="rgba(90,90,90,.55)" stroke-width=".9"/><rect x="893.9" y="370.1" width="14.600" height="14.800" fill="#602870" stroke="rgba(90,90,90,.55)" stroke-width=".9"/><rect x="912.7" y="370.1" width="14.600" height="14.800" fill="#781850" stroke="rgba(90,90,90,.55)" stroke-width=".9"/><rect x="931.5" y="370.1" width="14.600" height="14.800" fill="#785038" stroke="rgba(90,90,90,.55)" stroke-width=".9"/><rect x="950.3" y="370.1" width="14.600" height="14.800" fill="#684018" stroke="rgba(90,90,90,.55)" stroke-width=".9"/><rect x="969.1" y="370.1" width="14.600" height="14.800" fill="#503830" stroke="rgba(90,90,90,.55)" stroke-width=".9"/></svg>
<div class="abs" style="left:813.200px;top:431.400px;width:178px;height:1px;background:#d6d6d6"></div>
<div class="abs" style="left:821px;top:439.700px;width:21px;height:20.500px;background:#a9a9a9;border-radius:3.500px;box-shadow:0 0 0 .5px #9a9a9a"></div>
<svg style="left:846px;top:442px" width="16" height="16" viewBox="0 0 16 16"><path d="M2.500 13.500l1-3 5-5 2 2-5 5z" fill="#f0f0f0" stroke="#6a6a6a" stroke-width=".8"/><path d="M8.500 4.500l2-2q1.200-.8 2.300.3t.3 2.300l-2 2z" fill="#555"/><path d="M7.500 4.500l4 4" stroke="#555" stroke-width="1.300"/></svg>
<svg style="left:860px;top:436px" width="120" height="30" viewBox="860 436 120 30" fill="none" stroke="#dadada" stroke-width=".8"><rect x="866.5" y="440.3" width="9.600" height="9.300" rx="1.500"/><rect x="877.4" y="440.3" width="9.600" height="9.300" rx="1.500"/><rect x="888.4" y="440.3" width="9.600" height="9.300" rx="1.500"/><rect x="899.3" y="440.3" width="9.600" height="9.300" rx="1.500"/><rect x="910.2" y="440.3" width="9.600" height="9.300" rx="1.500"/><rect x="921.1" y="440.3" width="9.600" height="9.300" rx="1.500"/><rect x="932.1" y="440.3" width="9.600" height="9.300" rx="1.500"/><rect x="943.0" y="440.3" width="9.600" height="9.300" rx="1.500"/><rect x="953.9" y="440.3" width="9.600" height="9.300" rx="1.500"/><rect x="964.9" y="440.3" width="9.600" height="9.300" rx="1.500"/><rect x="866.5" y="451.2" width="9.600" height="9.300" rx="1.500"/><rect x="877.4" y="451.2" width="9.600" height="9.300" rx="1.500"/><rect x="888.4" y="451.2" width="9.600" height="9.300" rx="1.500"/><rect x="899.3" y="451.2" width="9.600" height="9.300" rx="1.500"/><rect x="910.2" y="451.2" width="9.600" height="9.300" rx="1.500"/><rect x="921.1" y="451.2" width="9.600" height="9.300" rx="1.500"/><rect x="932.1" y="451.2" width="9.600" height="9.300" rx="1.500"/><rect x="943.0" y="451.2" width="9.600" height="9.300" rx="1.500"/><rect x="953.9" y="451.2" width="9.600" height="9.300" rx="1.500"/><rect x="964.9" y="451.2" width="9.600" height="9.300" rx="1.500"/><circle cx="902" cy="466.500" r=".8" fill="#c4c4c4" stroke="none"/></svg>
</div></body></html>
